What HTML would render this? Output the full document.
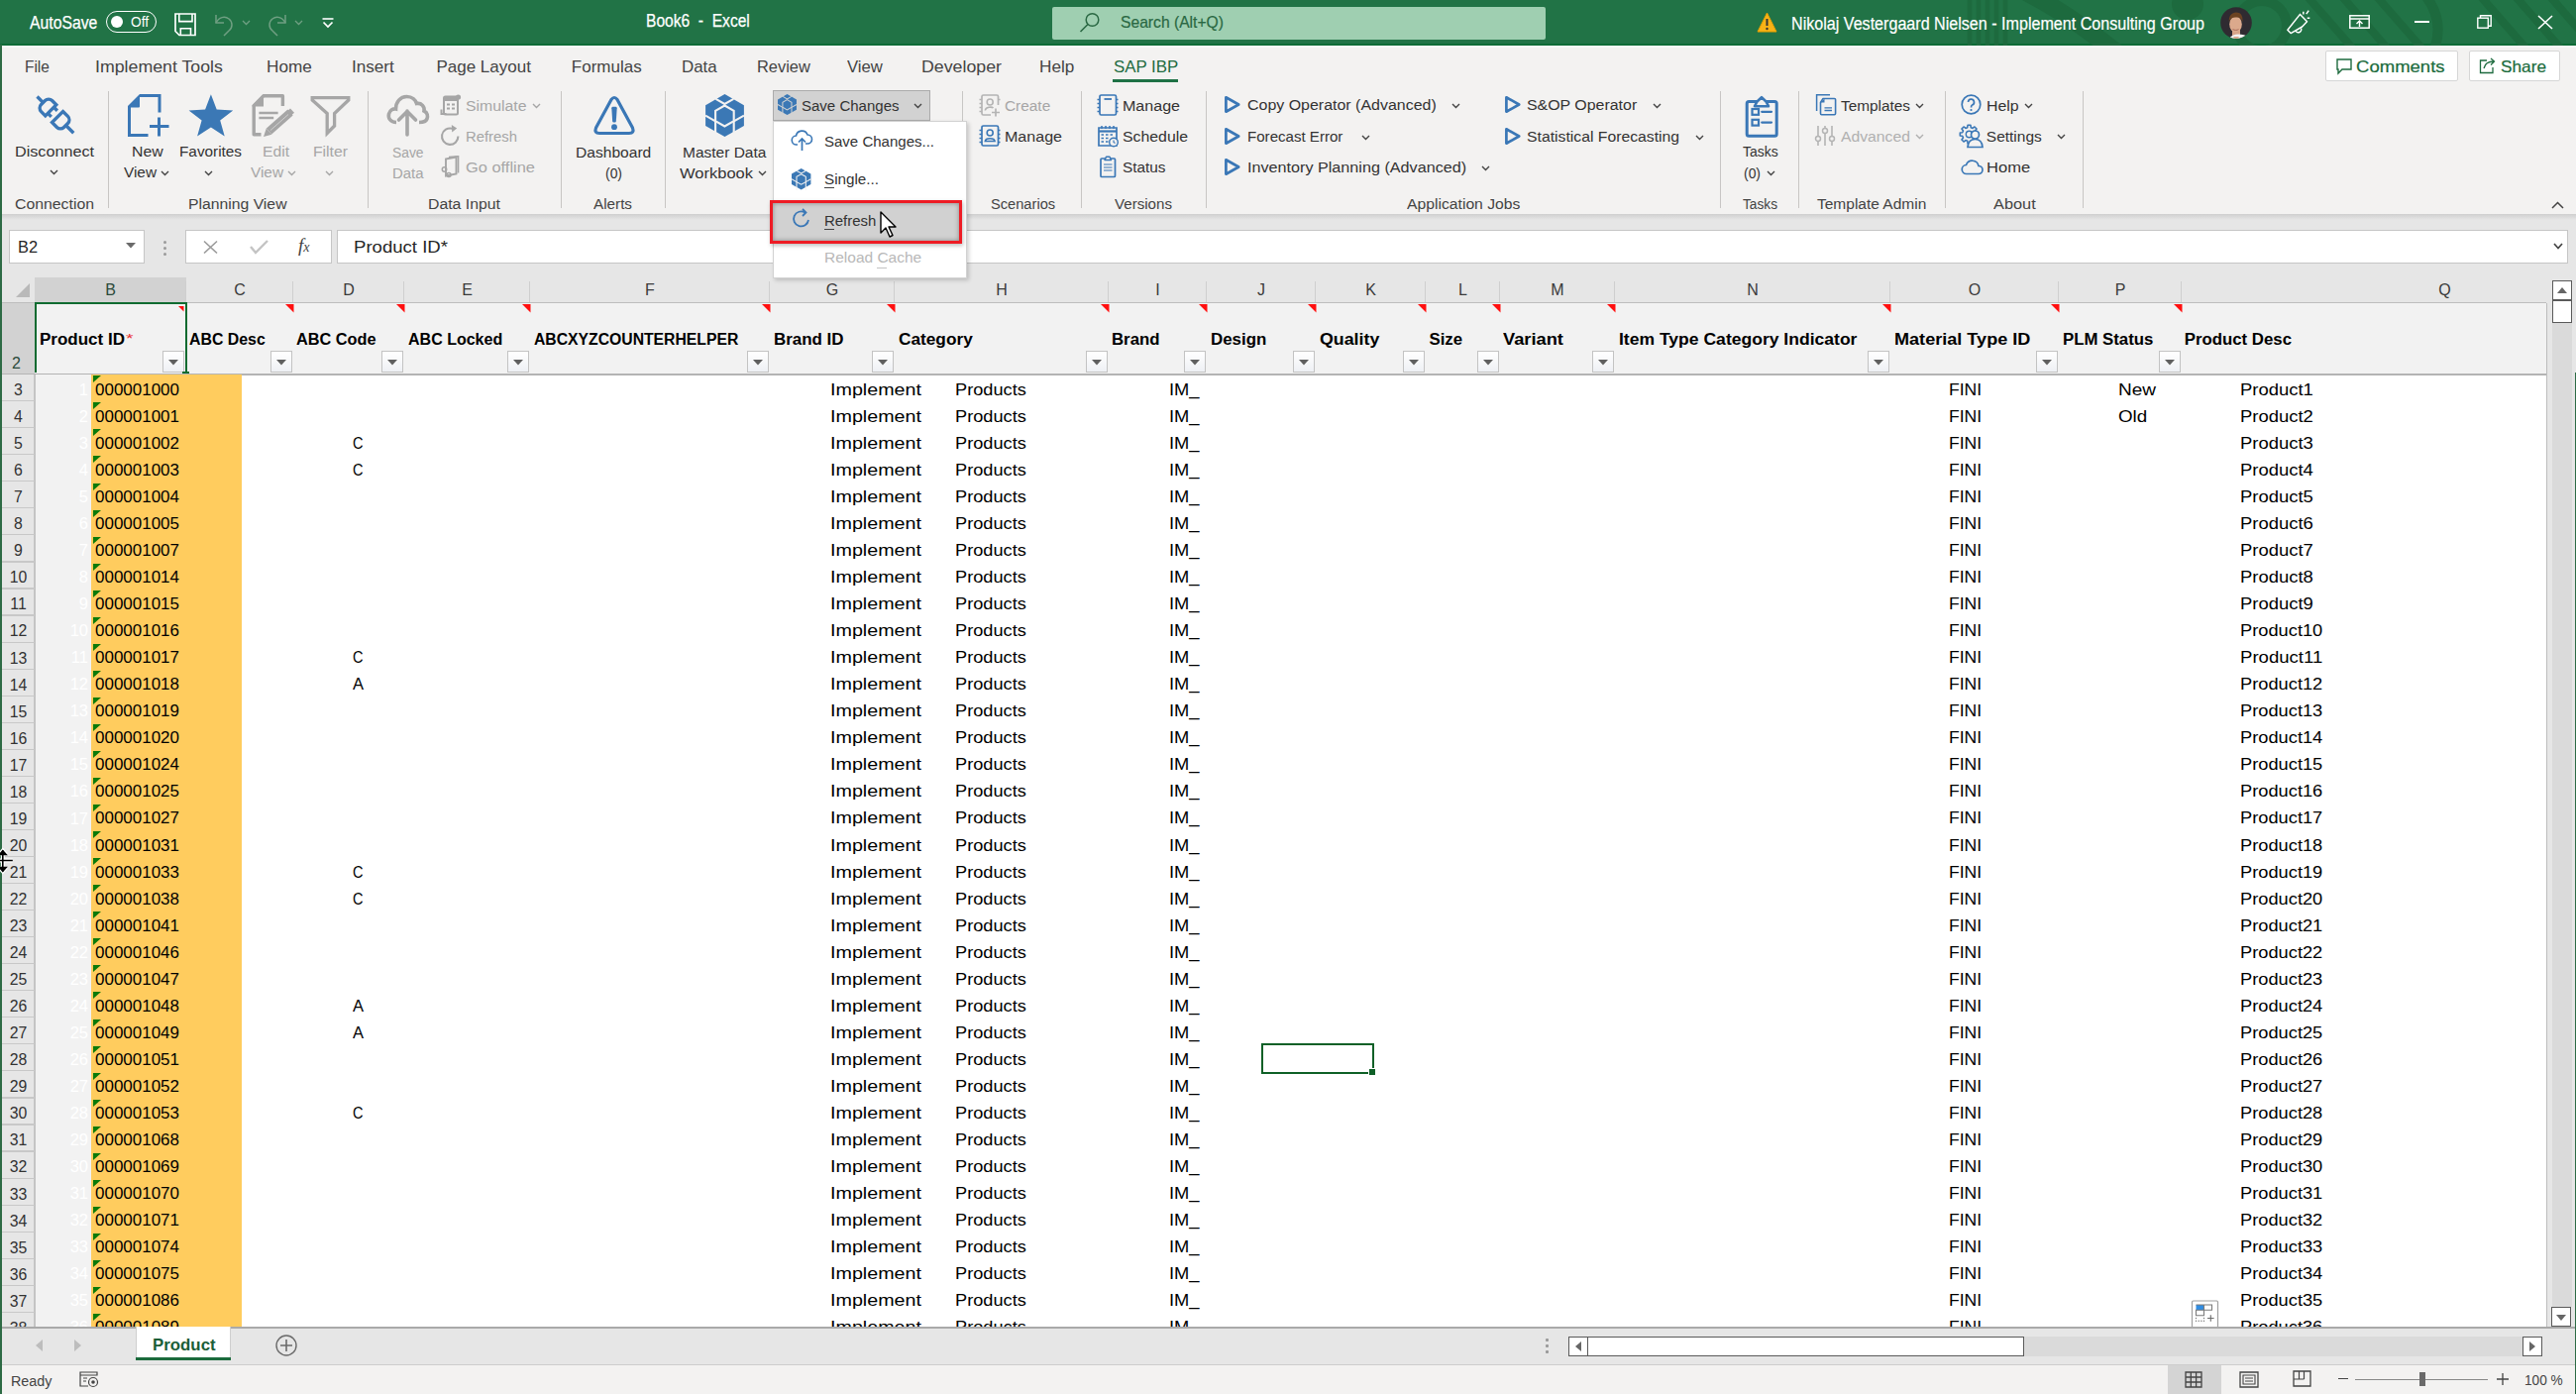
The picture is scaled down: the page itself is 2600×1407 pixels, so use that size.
<!DOCTYPE html><html><head><meta charset="utf-8"><style>
*{margin:0;padding:0;box-sizing:border-box}
html,body{width:2600px;height:1407px;overflow:hidden;background:#fff;position:relative}
body>div,body>svg{position:absolute}
.t{white-space:pre;line-height:1;font-family:"Liberation Sans",sans-serif;transform-origin:0 0}
svg{overflow:visible}
</style></head><body><div style="left:0px;top:45px;width:2600px;height:171px;background:#f3f2f1;"></div>
<div style="left:0px;top:45.5px;width:2600px;height:2.5px;background:#f9f9f9;"></div>
<div style="left:0px;top:0px;width:2600px;height:45.5px;background:#217346;"></div>
<div style="left:0px;top:43.8px;width:2600px;height:1.9px;background:#0c6b36;"></div>
<div style="left:0px;top:216px;width:2600px;height:64px;background:#e6e6e6;"></div>
<div style="left:0px;top:216px;width:2600px;height:6px;background:linear-gradient(#cfcfcf,#e6e6e6);"></div>
<div class="t" style="left:29.5px;top:14.57px;font-size:17.5px;color:#ffffff;transform:scaleX(0.9000);-webkit-text-stroke:0.25px #fff;">AutoSave</div>
<div style="left:107px;top:11px;width:51px;height:22px;border:1.6px solid #fff;border-radius:11px"></div>
<div style="left:112px;top:16px;width:12px;height:12px;border-radius:6px;background:#fff"></div>
<div class="t" style="left:132px;top:14.48px;font-size:15.5px;color:#ffffff;transform:scaleX(0.8828);">Off</div>
<svg style="left:176px;top:12.5px;" width="23" height="24" viewBox="0 0 23 24"><path d="M1 1H21V22.5H5L1 18.5Z" fill="none" stroke="#fff" stroke-width="1.7"/><path d="M4.8 1V8.6H18V1" fill="none" stroke="#fff" stroke-width="1.6"/><path d="M6.3 22.5V15.8H16.5V22.5" fill="none" stroke="#fff" stroke-width="1.6"/></svg>
<svg style="left:215px;top:13px;" width="22" height="23" viewBox="0 0 22 23"><path d="M3 2v8h8" fill="none" stroke="#6f9f82" stroke-width="1.5"/><path d="M3 10C6 4 12 3 16 6c4 3 4 9 0 12l-5 5" fill="none" stroke="#6f9f82" stroke-width="1.5"/></svg>
<svg style="left:244px;top:20px;" width="9" height="6" viewBox="0 0 9 6"><path d="M1 1l3.5 3.5L8 1" fill="none" stroke="#6f9f82" stroke-width="1.3"/></svg>
<svg style="left:269px;top:13px;" width="22" height="23" viewBox="0 0 22 23"><path d="M19 2v8h-8" fill="none" stroke="#6f9f82" stroke-width="1.5"/><path d="M19 10C16 4 10 3 6 6c-4 3-4 9 0 12l5 5" fill="none" stroke="#6f9f82" stroke-width="1.5"/></svg>
<svg style="left:297px;top:20px;" width="9" height="6" viewBox="0 0 9 6"><path d="M1 1l3.5 3.5L8 1" fill="none" stroke="#6f9f82" stroke-width="1.3"/></svg>
<svg style="left:325px;top:18px;" width="12" height="11" viewBox="0 0 12 11"><path d="M0.5 1h11" stroke="#fff" stroke-width="1.6"/><path d="M1.5 4.5l4.5 4.5 4.5-4.5" fill="none" stroke="#fff" stroke-width="1.7"/></svg>
<div class="t" style="left:652px;top:13.18px;font-size:17.5px;color:#ffffff;transform:scaleX(0.8905);-webkit-text-stroke:0.25px #fff;">Book6  -  Excel</div>
<div style="left:1062px;top:7px;width:498px;height:33px;background:#9fcfb1;border-radius:2px"></div>
<svg style="left:1089px;top:12px;" width="22" height="22" viewBox="0 0 22 22"><circle cx="13.5" cy="8" r="6.3" fill="none" stroke="#2a6843" stroke-width="1.5"/><path d="M9 12.5L1.5 20" stroke="#2a6843" stroke-width="1.6"/></svg>
<div class="t" style="left:1130.5px;top:14.25px;font-size:17px;color:#2a6843;transform:scaleX(0.9211);-webkit-text-stroke:0.2px #2a6843;">Search (Alt+Q)</div>
<svg style="left:1940px;top:0;overflow:hidden" width="660" height="45.5" viewBox="0 0 660 45.5"><g fill="none" stroke="#1d6a3e"><path d="M48 -5V55M57 -5V55M66 -5V55M75 -5V55M84 -5V55" stroke-width="4.5"/><path d="M105 -8Q150 15 205 60" stroke-width="18"/><circle cx="268" cy="4" r="16" fill="#1d6a3e" stroke="none"/><circle cx="343" cy="26" r="25" stroke-width="10"/><path d="M385 -8L440 55M420 -8L475 55M455 -8L510 55" stroke-width="8"/><path d="M505 -8Q530 20 515 55" stroke-width="10"/><path d="M560 -8L615 55M595 -8L650 55M630 -8L685 55" stroke-width="8"/></g></svg>
<svg style="left:1773px;top:12px;" width="21" height="21" viewBox="0 0 21 21"><path d="M10.5 1L20 20H1z" fill="#f7b217" stroke="#e8a000" stroke-width="1"/><path d="M10.5 7v7" stroke="#333" stroke-width="2"/><circle cx="10.5" cy="17" r="1.2" fill="#333"/></svg>
<div class="t" style="left:1807.5px;top:14.80px;font-size:18px;color:#ffffff;transform:scaleX(0.8944);-webkit-text-stroke:0.2px #fff;">Nikolaj Vestergaard Nielsen - Implement Consulting Group</div>
<svg style="left:2240.5px;top:7px;" width="32" height="32" viewBox="0 0 32 32"><defs><clipPath id="av"><circle cx="16" cy="16" r="15.8"/></clipPath></defs><g clip-path="url(#av)"><rect width="32" height="32" fill="#2f2b31"/><path d="M12 23h8v10h-8z" fill="#d7a488"/><path d="M8 34C10 29 14 27.5 18 27.5S26 28 29 31V34z" fill="#f4f2f2"/><path d="M13 30l3 4 3-4" fill="#d7a488"/><ellipse cx="15.5" cy="17.5" rx="6.3" ry="8" fill="#dba98c"/><path d="M8.8 15C8.5 9 11.5 5.5 16 5.5S23 8.5 22.5 15C21 11 19 10.5 16 10.5S10.5 11 8.8 15z" fill="#6b4222"/><path d="M12.5 22.5c2 1.2 4.5 1.2 6 0" stroke="#a86a58" stroke-width="1" fill="none"/></g></svg>
<svg style="left:2308px;top:11px;" width="24" height="24" viewBox="0 0 24 24"><path d="M13.5 3.4L20.5 10.7L15.6 16L4.1 22.6L0.9 19.3Z" fill="none" stroke="#fff" stroke-width="1.5" stroke-linejoin="round"/><path d="M9 20A3 3 0 0 0 14.5 17.5" fill="none" stroke="#fff" stroke-width="1.4"/><path d="M16.8 0.8V3.6M19.8 3.2L22.2 -0.3M20.7 7.3H23.3" stroke="#fff" stroke-width="1.5"/></svg>
<svg style="left:2371px;top:15px;" width="21" height="14" viewBox="0 0 21 14"><rect x="0.8" y="0.8" width="19.4" height="12.4" fill="none" stroke="#fff" stroke-width="1.5"/><path d="M1 4h19" stroke="#fff" stroke-width="1.5"/><path d="M10.5 12V6M7.5 9l3-3 3 3" fill="none" stroke="#fff" stroke-width="1.4"/></svg>
<div style="left:2437px;top:21px;width:15px;height:1.6px;background:#fff;"></div>
<svg style="left:2500px;top:15px;" width="15" height="14" viewBox="0 0 15 14"><rect x="0.8" y="3.2" width="10.5" height="10" fill="none" stroke="#fff" stroke-width="1.4"/><path d="M3.5 3V0.8h10.7v10.5H11.5" fill="none" stroke="#fff" stroke-width="1.4"/></svg>
<svg style="left:2561px;top:15px;" width="16" height="15" viewBox="0 0 16 15"><path d="M1 1l14 13M15 1L1 14" stroke="#fff" stroke-width="1.6"/></svg>
<div class="t" style="left:24.8px;top:58.95px;font-size:17px;color:#444;transform:scaleX(0.9090);">File</div>
<div class="t" style="left:96.3px;top:58.95px;font-size:17px;color:#444;transform:scaleX(1.0440);">Implement Tools</div>
<div class="t" style="left:268.6px;top:58.95px;font-size:17px;color:#444;transform:scaleX(1.0099);">Home</div>
<div class="t" style="left:354.7px;top:58.95px;font-size:17px;color:#444;transform:scaleX(1.0066);">Insert</div>
<div class="t" style="left:440.4px;top:58.95px;font-size:17px;color:#444;">Page Layout</div>
<div class="t" style="left:576.8px;top:58.95px;font-size:17px;color:#444;">Formulas</div>
<div class="t" style="left:687.8px;top:58.95px;font-size:17px;color:#444;transform:scaleX(0.9942);">Data</div>
<div class="t" style="left:763.6px;top:58.95px;font-size:17px;color:#444;transform:scaleX(0.9652);">Review</div>
<div class="t" style="left:855.4px;top:58.95px;font-size:17px;color:#444;transform:scaleX(0.9824);">View</div>
<div class="t" style="left:929.9px;top:58.95px;font-size:17px;color:#444;transform:scaleX(1.0453);">Developer</div>
<div class="t" style="left:1048.9px;top:58.95px;font-size:17px;color:#444;transform:scaleX(1.0096);">Help</div>
<div class="t" style="left:1123.6px;top:58.95px;font-size:17px;color:#1e6b3f;transform:scaleX(0.9919);">SAP IBP</div>
<div style="left:1123px;top:80px;width:66px;height:3px;background:#1e7145;"></div>
<div style="left:2347px;top:51px;width:134px;height:31px;background:#fff;border:1px solid #d6d6d6;border-radius:2px"></div>
<svg style="left:2358px;top:59px;" width="16" height="16" viewBox="0 0 16 16"><path d="M1 1h14v10H6l-4 4v-4H1z" fill="none" stroke="#1e6b3f" stroke-width="1.4"/></svg>
<div class="t" style="left:2377.6px;top:58.82px;font-size:16.5px;color:#1a6b3c;transform:scaleX(1.1232);-webkit-text-stroke:0.2px #1a6b3c;">Comments</div>
<div style="left:2492px;top:51px;width:92px;height:31px;background:#fff;border:1px solid #d6d6d6;border-radius:2px"></div>
<svg style="left:2502px;top:58px;" width="17" height="17" viewBox="0 0 17 17"><path d="M8 3H1.5v12.5h12.5V10" fill="none" stroke="#1e6b3f" stroke-width="1.3"/><path d="M5 11c1-5 5-7 10-7M12 1l3.5 3L12 7.5" fill="none" stroke="#1e6b3f" stroke-width="1.3"/></svg>
<div class="t" style="left:2524.3px;top:58.82px;font-size:16.5px;color:#1a6b3c;transform:scaleX(1.0447);-webkit-text-stroke:0.2px #1a6b3c;">Share</div>
<div style="left:108.5px;top:92px;width:1.3px;height:118px;background:#c8c6c4;"></div>
<div style="left:371px;top:92px;width:1.3px;height:118px;background:#c8c6c4;"></div>
<div style="left:566px;top:92px;width:1.3px;height:118px;background:#c8c6c4;"></div>
<div style="left:671px;top:92px;width:1.3px;height:118px;background:#c8c6c4;"></div>
<div style="left:971px;top:92px;width:1.3px;height:118px;background:#c8c6c4;"></div>
<div style="left:1091px;top:92px;width:1.3px;height:118px;background:#c8c6c4;"></div>
<div style="left:1217px;top:92px;width:1.3px;height:118px;background:#c8c6c4;"></div>
<div style="left:1736px;top:92px;width:1.3px;height:118px;background:#c8c6c4;"></div>
<div style="left:1815px;top:92px;width:1.3px;height:118px;background:#c8c6c4;"></div>
<div style="left:1963px;top:92px;width:1.3px;height:118px;background:#c8c6c4;"></div>
<div style="left:2102px;top:92px;width:1.3px;height:118px;background:#c8c6c4;"></div>
<svg style="left:36px;top:96px;" width="42" height="42" viewBox="0 0 42 42"><g transform="translate(1.5 1.5) rotate(45)" fill="none" stroke="#3a77b6" stroke-width="3.3"><path d="M0 0H9"/><path d="M19.5 -7.8H13.5A5 5 0 0 0 8.5 -2.8V2.8A5 5 0 0 0 13.5 7.8H19.5Z"/><path d="M19.5 -4.3H24.5M19.5 4.3H24.5"/><path d="M29 -7.8H36A5 5 0 0 1 41 -2.8V2.8A5 5 0 0 1 36 7.8H29Z"/><path d="M41 0H52"/></g></svg>
<div class="t" style="left:15px;top:144.98px;font-size:15.5px;color:#333333;transform:scaleX(1.0433);">Disconnect</div>
<svg style="left:50px;top:171px;" width="9" height="6" viewBox="0 0 9 6"><path d="M1 1l3.5 3.5L8 1" fill="none" stroke="#444" stroke-width="1.4"/></svg>
<div class="t" style="left:14.5px;top:198.28px;font-size:15.5px;color:#444;transform:scaleX(1.0202);">Connection</div>
<svg style="left:129px;top:95px;" width="44" height="44" viewBox="0 0 44 44"><path d="M12 1.5H32V18.5M20.5 41.5H1.5V12" fill="none" stroke="#3a77b6" stroke-width="3"/><path d="M0 12L12 0V12.5Q12 13.5 11 13.5H0z" fill="#3a77b6"/><path d="M31.5 23.5V42.5M22 32.5H41.5" stroke="#3a77b6" stroke-width="3"/></svg>
<div class="t" style="left:133px;top:144.98px;font-size:15.5px;color:#333333;transform:scaleX(1.0191);">New</div>
<div class="t" style="left:125px;top:166.48px;font-size:15.5px;color:#333333;transform:scaleX(0.9905);">View</div>
<svg style="left:162px;top:172px;" width="9" height="6" viewBox="0 0 9 6"><path d="M1 1l3.5 3.5L8 1" fill="none" stroke="#444" stroke-width="1.4"/></svg>
<svg style="left:190.5px;top:95px;" width="44" height="43" viewBox="0 0 44 43"><path d="M21.9 0.2 L27.7 15.6 L44.2 16.4 L31.2 26.6 L35.7 42.5 L21.9 33.4 L8.1 42.5 L12.6 26.6 L-0.4 16.4 L16.1 15.6z" fill="#3b78b5"/></svg>
<div class="t" style="left:181px;top:144.98px;font-size:15.5px;color:#333333;transform:scaleX(0.9884);">Favorites</div>
<svg style="left:206px;top:172px;" width="9" height="6" viewBox="0 0 9 6"><path d="M1 1l3.5 3.5L8 1" fill="none" stroke="#444" stroke-width="1.4"/></svg>
<svg style="left:254px;top:95px;" width="45" height="44" viewBox="0 0 45 44"><path d="M31.4 12V1.8H12L2.2 11.6V40.7H9.5" fill="none" stroke="#a6a6a6" stroke-width="3.4" stroke-linejoin="round"/><path d="M0.5 11.5L12 0V12.5H0.5z" fill="#a6a6a6"/><path d="M7.4 19H26.6M7.4 24H22.2" stroke="#a6a6a6" stroke-width="2.6"/><path d="M17.5 37.5L39 18.5" stroke="#a6a6a6" stroke-width="8"/><path d="M14.8 34.5L20.3 40.7L12 43z" fill="#a6a6a6"/><path d="M39 14.5L43 18.8L40 21.5L36 17.2z" fill="#a6a6a6"/><path d="M19 36.5L37 20.5" stroke="#cfcfcf" stroke-width="1"/></svg>
<div class="t" style="left:265px;top:144.98px;font-size:15.5px;color:#a6a6a6;transform:scaleX(1.0109);">Edit</div>
<div class="t" style="left:253px;top:166.48px;font-size:15.5px;color:#a6a6a6;transform:scaleX(0.9905);">View</div>
<svg style="left:290px;top:172px;" width="9" height="6" viewBox="0 0 9 6"><path d="M1 1l3.5 3.5L8 1" fill="none" stroke="#a6a6a6" stroke-width="1.4"/></svg>
<svg style="left:313px;top:96px;" width="42" height="41" viewBox="0 0 42 41"><path d="M2.2 2.6H38.8V5L24.6 18.5V31L17.2 38.5V18.5L2.2 5Z" fill="none" stroke="#a6a6a6" stroke-width="3.3" stroke-linejoin="miter"/></svg>
<div class="t" style="left:316px;top:144.98px;font-size:15.5px;color:#a6a6a6;transform:scaleX(1.0161);">Filter</div>
<svg style="left:328px;top:172px;" width="9" height="6" viewBox="0 0 9 6"><path d="M1 1l3.5 3.5L8 1" fill="none" stroke="#a6a6a6" stroke-width="1.4"/></svg>
<div class="t" style="left:190px;top:198.28px;font-size:15.5px;color:#444;transform:scaleX(1.0158);">Planning View</div>
<svg style="left:390px;top:95px;" width="43" height="43" viewBox="0 0 43 43"><path d="M10 28.5C4 28.5 1.5 24 2.5 20C3.5 16 7 14.5 9.5 15C9.5 8 14 2.5 20.5 2.5C26 2.5 29.5 6 30.5 9.5C35 8.5 39 12.5 38 17C41.5 18.5 42 22 41 25C40 27.5 37.5 28.5 33 28.5" fill="none" stroke="#a6a6a6" stroke-width="3.6"/><path d="M21 41V17M12.5 26L21 17.5 29.5 26" fill="none" stroke="#a6a6a6" stroke-width="3.6" stroke-linecap="round"/></svg>
<div class="t" style="left:395.5px;top:145.68px;font-size:15.5px;color:#a6a6a6;transform:scaleX(0.8916);">Save</div>
<div class="t" style="left:395.5px;top:166.98px;font-size:15.5px;color:#a6a6a6;transform:scaleX(0.9621);">Data</div>
<svg style="left:444px;top:95px;" width="22" height="22" viewBox="0 0 22 22"><rect x="4" y="2.5" width="14" height="18" rx="1.5" fill="none" stroke="#a6a6a6" stroke-width="2"/><path d="M4 3h14v4H4z" fill="#a6a6a6"/><path d="M7 10.5h3M12 10.5h3M7 14.5h3M12 14.5h3" stroke="#a6a6a6" stroke-width="2.2"/><circle cx="18.5" cy="3" r="2.6" fill="#a6a6a6"/><path d="M1.5 15.5v4.5h5" fill="none" stroke="#a6a6a6" stroke-width="2"/></svg>
<div class="t" style="left:470px;top:98.88px;font-size:15.5px;color:#a6a6a6;transform:scaleX(1.0198);">Simulate</div>
<svg style="left:537px;top:104px;" width="9" height="6" viewBox="0 0 9 6"><path d="M1 1l3.5 3.5L8 1" fill="none" stroke="#a6a6a6" stroke-width="1.4"/></svg>
<svg style="left:445px;top:126px;" width="20" height="22" viewBox="0 0 20 22"><path d="M11.5 3.8A8.2 8.2 0 1 0 17.4 11.5" fill="none" stroke="#a6a6a6" stroke-width="2.1"/><path d="M10.8 0L16.2 3.6L11.2 7.6z" fill="#a6a6a6"/></svg>
<div class="t" style="left:470px;top:129.88px;font-size:15.5px;color:#a6a6a6;transform:scaleX(0.9581);">Refresh</div>
<svg style="left:445px;top:157px;" width="20" height="22" viewBox="0 0 20 22"><path d="M5 3.5L15.5 1.5V18.5L5 20.5z" fill="none" stroke="#a6a6a6" stroke-width="1.9"/><path d="M8 1.5L17.5 0.8V17.5" fill="none" stroke="#a6a6a6" stroke-width="1.6"/><circle cx="3.5" cy="14" r="2.2" fill="none" stroke="#a6a6a6" stroke-width="1.5"/><circle cx="8" cy="19.5" r="2" fill="none" stroke="#a6a6a6" stroke-width="1.5"/></svg>
<div class="t" style="left:470px;top:160.88px;font-size:15.5px;color:#a6a6a6;transform:scaleX(1.0596);">Go offline</div>
<div class="t" style="left:432px;top:198.28px;font-size:15.5px;color:#444;transform:scaleX(1.0207);">Data Input</div>
<svg style="left:598px;top:96px;" width="44" height="41" viewBox="0 0 44 41"><path d="M19 4.5Q22 0.5 25 4.5L40.5 33Q42.5 38.5 37 38.5H7Q1.5 38.5 3.5 33z" fill="none" stroke="#3a77b6" stroke-width="3.2" stroke-linejoin="round"/><path d="M19.3 13.2Q19.3 11.8 20.7 11.8H23.3Q24.7 11.8 24.7 13.2L23.8 26.5Q23.7 27.5 22.7 27.5H21.3Q20.3 27.5 20.2 26.5z" fill="#3a77b6"/><circle cx="22" cy="32.2" r="2.9" fill="#3a77b6"/></svg>
<div class="t" style="left:581px;top:145.68px;font-size:15.5px;color:#333333;transform:scaleX(1.0062);">Dashboard</div>
<div class="t" style="left:611px;top:166.98px;font-size:15.5px;color:#333333;transform:scaleX(0.8973);">(0)</div>
<div class="t" style="left:599px;top:198.28px;font-size:15.5px;color:#444;transform:scaleX(0.9843);">Alerts</div>
<svg style="left:711.5px;top:95px;" width="39" height="43" viewBox="0 0 38.8 43"><path d="M19.4 0L38.8 11.2V32L19.4 43 0 32V11.2z" fill="#3b78b5"/><g fill="none" stroke="#f3f2f1" stroke-width="2.1" stroke-linejoin="miter"><path d="M10.4 4.9L19.3 10 28.3 4.9"/><path d="M19.3 11.5L28.6 16.8V27.2L19.3 32.5 10 27.2V16.8z"/><path d="M0 21.6L10 27.3M38.8 21.6L28.6 27.3M10 27.2V44M28.6 27.2V44"/></g></svg>
<div class="t" style="left:689px;top:145.68px;font-size:15.5px;color:#333333;">Master Data</div>
<div class="t" style="left:686px;top:166.98px;font-size:15.5px;color:#333333;transform:scaleX(1.0648);">Workbook</div>
<svg style="left:765px;top:172px;" width="9" height="6" viewBox="0 0 9 6"><path d="M1 1l3.5 3.5L8 1" fill="none" stroke="#444" stroke-width="1.4"/></svg>
<div style="left:780px;top:91px;width:159px;height:31px;background:#d2d2d2;border:1px solid #ababab"></div>
<svg style="left:785px;top:95px;" width="19" height="21" viewBox="0 0 38.8 43"><path d="M19.4 0L38.8 11.2V32L19.4 43 0 32V11.2z" fill="#3b78b5"/><g fill="none" stroke="#d2d2d2" stroke-width="2.1" stroke-linejoin="miter"><path d="M10.4 4.9L19.3 10 28.3 4.9"/><path d="M19.3 11.5L28.6 16.8V27.2L19.3 32.5 10 27.2V16.8z"/><path d="M0 21.6L10 27.3M38.8 21.6L28.6 27.3M10 27.2V44M28.6 27.2V44"/></g></svg>
<div class="t" style="left:809px;top:98.88px;font-size:15.5px;color:#333333;transform:scaleX(0.9687);">Save Changes</div>
<svg style="left:922px;top:104px;" width="9" height="6" viewBox="0 0 9 6"><path d="M1 1l3.5 3.5L8 1" fill="none" stroke="#444" stroke-width="1.4"/></svg>
<svg style="left:987px;top:94px;" width="24" height="24" viewBox="0 0 24 24"><path d="M13 22H5.5Q4 22 4 20.5V3.5Q4 2 5.5 2H19Q20.5 2 20.5 3.5V12" fill="none" stroke="#b4b4b4" stroke-width="1.7"/><circle cx="12.2" cy="9" r="3" fill="none" stroke="#b4b4b4" stroke-width="1.6"/><path d="M7.3 17.5C7.8 13.8 14 13.5 15.5 15" fill="none" stroke="#b4b4b4" stroke-width="1.6"/><path d="M1.5 6.5H4M1.5 10.5H4M1.5 14.5H4M1.5 18.5H4M20.5 6.5H22.5" stroke="#b4b4b4" stroke-width="1.3"/><path d="M18 15.5V23.5M14 19.5H22" stroke="#b4b4b4" stroke-width="1.7"/></svg>
<div class="t" style="left:1013.8px;top:98.88px;font-size:15.5px;color:#a6a6a6;transform:scaleX(0.9930);">Create</div>
<svg style="left:987px;top:125px;" width="24" height="24" viewBox="0 0 24 24"><rect x="4" y="2" width="16.5" height="20" rx="1.5" fill="none" stroke="#3a77b6" stroke-width="1.7"/><circle cx="12.2" cy="9" r="3" fill="none" stroke="#3a77b6" stroke-width="1.6"/><path d="M7.3 17.5C7.8 13.8 16.6 13.8 17.1 17.5z" fill="none" stroke="#3a77b6" stroke-width="1.6"/><path d="M1.5 6.5H4M1.5 10.5H4M1.5 14.5H4M1.5 18.5H4M20.5 6.5H22.5M20.5 10.5H22.5M20.5 14.5H22.5M20.5 18.5H22.5" stroke="#3a77b6" stroke-width="1.3"/></svg>
<div class="t" style="left:1013.8px;top:129.88px;font-size:15.5px;color:#333333;transform:scaleX(1.0354);">Manage</div>
<div class="t" style="left:999.5px;top:198.28px;font-size:15.5px;color:#444;transform:scaleX(0.9445);">Scenarios</div>
<svg style="left:1106px;top:94px;" width="24" height="24" viewBox="0 0 24 24"><rect x="4" y="2" width="16.5" height="20" rx="1.5" fill="none" stroke="#3a77b6" stroke-width="1.7"/><path d="M8.5 6H16" stroke="#3a77b6" stroke-width="1.8"/><path d="M1.5 6.5H4M1.5 10.5H4M1.5 14.5H4M1.5 18.5H4M20.5 6.5H22.5M20.5 10.5H22.5M20.5 14.5H22.5M20.5 18.5H22.5" stroke="#3a77b6" stroke-width="1.3"/></svg>
<div class="t" style="left:1132.5px;top:98.88px;font-size:15.5px;color:#333333;transform:scaleX(1.0354);">Manage</div>
<svg style="left:1106px;top:125px;" width="24" height="24" viewBox="0 0 24 24"><path d="M3 4H21V22H3z" fill="none" stroke="#3a77b6" stroke-width="1.7"/><path d="M3 7.5H21" stroke="#3a77b6" stroke-width="2.2"/><path d="M6 2V5M10 2V5M14 2V5M18 2V5" stroke="#3a77b6" stroke-width="1.5"/><path d="M5.5 11H8M10 11H12.5M14.5 11H17M5.5 14.5H8M10 14.5H12.5M5.5 18H8M10 18H12.5" stroke="#3a77b6" stroke-width="1.6"/><circle cx="18" cy="18.5" r="4.3" fill="#f3f2f1" stroke="#3a77b6" stroke-width="1.4"/><path d="M18 16.5V18.5L19.5 19.5" fill="none" stroke="#3a77b6" stroke-width="1.1"/></svg>
<div class="t" style="left:1132.5px;top:129.88px;font-size:15.5px;color:#333333;transform:scaleX(1.0211);">Schedule</div>
<svg style="left:1106px;top:156px;" width="24" height="24" viewBox="0 0 24 24"><rect x="5" y="4" width="14.5" height="18.5" rx="1" fill="none" stroke="#3a77b6" stroke-width="1.7"/><path d="M9 5.5L10.5 2.2H14L15.5 5.5z" fill="#f3f2f1" stroke="#3a77b6" stroke-width="1.5" stroke-linejoin="round"/><path d="M8 10H16.5M8 13H16.5M8 16H16.5" stroke="#3a77b6" stroke-width="1.2"/></svg>
<div class="t" style="left:1132.5px;top:160.88px;font-size:15.5px;color:#333333;transform:scaleX(0.9899);">Status</div>
<div class="t" style="left:1124.5px;top:198.28px;font-size:15.5px;color:#444;transform:scaleX(0.9756);">Versions</div>
<svg style="left:1235px;top:96px;" width="18" height="19" viewBox="0 0 18 19"><path d="M2.4 2.3L15.2 9.5L2.4 16.7z" fill="none" stroke="#3a77b6" stroke-width="2.7" stroke-linejoin="round"/></svg>
<div class="t" style="left:1259.3px;top:98.47px;font-size:15.5px;color:#333333;transform:scaleX(1.0295);">Copy Operator (Advanced)</div>
<svg style="left:1465px;top:104px;" width="9" height="6" viewBox="0 0 9 6"><path d="M1 1l3.5 3.5L8 1" fill="none" stroke="#444" stroke-width="1.4"/></svg>
<svg style="left:1235px;top:127.5px;" width="18" height="19" viewBox="0 0 18 19"><path d="M2.4 2.3L15.2 9.5L2.4 16.7z" fill="none" stroke="#3a77b6" stroke-width="2.7" stroke-linejoin="round"/></svg>
<div class="t" style="left:1259.3px;top:129.98px;font-size:15.5px;color:#333333;transform:scaleX(0.9732);">Forecast Error</div>
<svg style="left:1374px;top:135.5px;" width="9" height="6" viewBox="0 0 9 6"><path d="M1 1l3.5 3.5L8 1" fill="none" stroke="#444" stroke-width="1.4"/></svg>
<svg style="left:1235px;top:159px;" width="18" height="19" viewBox="0 0 18 19"><path d="M2.4 2.3L15.2 9.5L2.4 16.7z" fill="none" stroke="#3a77b6" stroke-width="2.7" stroke-linejoin="round"/></svg>
<div class="t" style="left:1259.3px;top:161.48px;font-size:15.5px;color:#333333;transform:scaleX(1.0431);">Inventory Planning (Advanced)</div>
<svg style="left:1495px;top:167px;" width="9" height="6" viewBox="0 0 9 6"><path d="M1 1l3.5 3.5L8 1" fill="none" stroke="#444" stroke-width="1.4"/></svg>
<svg style="left:1518px;top:96px;" width="18" height="19" viewBox="0 0 18 19"><path d="M2.4 2.3L15.2 9.5L2.4 16.7z" fill="none" stroke="#3a77b6" stroke-width="2.7" stroke-linejoin="round"/></svg>
<div class="t" style="left:1541.2px;top:98.47px;font-size:15.5px;color:#333333;transform:scaleX(1.0271);">S&amp;OP Operator</div>
<svg style="left:1668px;top:104px;" width="9" height="6" viewBox="0 0 9 6"><path d="M1 1l3.5 3.5L8 1" fill="none" stroke="#444" stroke-width="1.4"/></svg>
<svg style="left:1518px;top:127.5px;" width="18" height="19" viewBox="0 0 18 19"><path d="M2.4 2.3L15.2 9.5L2.4 16.7z" fill="none" stroke="#3a77b6" stroke-width="2.7" stroke-linejoin="round"/></svg>
<div class="t" style="left:1541.2px;top:129.98px;font-size:15.5px;color:#333333;transform:scaleX(1.0164);">Statistical Forecasting</div>
<svg style="left:1711px;top:135.5px;" width="9" height="6" viewBox="0 0 9 6"><path d="M1 1l3.5 3.5L8 1" fill="none" stroke="#444" stroke-width="1.4"/></svg>
<div class="t" style="left:1419.6px;top:198.28px;font-size:15.5px;color:#444;transform:scaleX(1.0135);">Application Jobs</div>
<svg style="left:1760px;top:94px;" width="36" height="45" viewBox="0 0 36 45"><rect x="3.2" y="8.5" width="30" height="34.8" rx="2" fill="none" stroke="#3a77b6" stroke-width="3"/><path d="M11 13.2H25L22.5 8.5 18 4.2 13.5 8.5Z" fill="#f3f2f1" stroke="#3a77b6" stroke-width="2.6" stroke-linejoin="round"/><rect x="8.5" y="16" width="6.5" height="5.8" fill="none" stroke="#3a77b6" stroke-width="2.2"/><rect x="8.5" y="26.8" width="6.5" height="5.8" fill="none" stroke="#3a77b6" stroke-width="2.2"/><path d="M18.2 18.8H28M18.2 29.6H28" stroke="#3a77b6" stroke-width="2.2" stroke-linecap="round"/></svg>
<div class="t" style="left:1758.7px;top:144.68px;font-size:15.5px;color:#333333;transform:scaleX(0.9010);">Tasks</div>
<div class="t" style="left:1760px;top:166.98px;font-size:15.5px;color:#333333;transform:scaleX(0.8973);">(0)</div>
<svg style="left:1783px;top:172px;" width="9" height="6" viewBox="0 0 9 6"><path d="M1 1l3.5 3.5L8 1" fill="none" stroke="#444" stroke-width="1.4"/></svg>
<div class="t" style="left:1759px;top:198.28px;font-size:15.5px;color:#444;transform:scaleX(0.8834);">Tasks</div>
<svg style="left:1832px;top:94px;" width="22" height="24" viewBox="0 0 22 24"><path d="M1.6 18V1.8H15" fill="none" stroke="#3a77b6" stroke-width="1.5"/><path d="M8 5.5H19.5Q20.6 5.5 20.6 6.6V20.6Q20.6 21.7 19.5 21.7H6.6Q5.5 21.7 5.5 20.6V9.5Z" fill="none" stroke="#3a77b6" stroke-width="1.6" stroke-linejoin="round"/><path d="M5.5 9.5L9.5 5.5V9.5z" fill="#3a77b6"/><path d="M9.5 14.8H17M9.5 17.5H17" stroke="#3a77b6" stroke-width="1.3"/></svg>
<div class="t" style="left:1858px;top:98.88px;font-size:15.5px;color:#333333;transform:scaleX(0.9909);">Templates</div>
<svg style="left:1933px;top:104px;" width="9" height="6" viewBox="0 0 9 6"><path d="M1 1l3.5 3.5L8 1" fill="none" stroke="#444" stroke-width="1.4"/></svg>
<svg style="left:1832px;top:126px;" width="21" height="22" viewBox="0 0 21 22"><path d="M3 1v20M10 1v20M17 1v20" stroke="#b4b4b4" stroke-width="1.6"/><circle cx="3" cy="14" r="2.5" fill="#f3f2f1" stroke="#b4b4b4" stroke-width="1.5"/><circle cx="10" cy="6" r="2.5" fill="#f3f2f1" stroke="#b4b4b4" stroke-width="1.5"/><circle cx="17" cy="14" r="2.5" fill="#f3f2f1" stroke="#b4b4b4" stroke-width="1.5"/></svg>
<div class="t" style="left:1858px;top:129.88px;font-size:15.5px;color:#b0b0b0;transform:scaleX(1.0153);">Advanced</div>
<svg style="left:1933px;top:135px;" width="9" height="6" viewBox="0 0 9 6"><path d="M1 1l3.5 3.5L8 1" fill="none" stroke="#b0b0b0" stroke-width="1.4"/></svg>
<div class="t" style="left:1834px;top:198.28px;font-size:15.5px;color:#444;">Template Admin</div>
<svg style="left:1979px;top:95px;" width="21" height="21" viewBox="0 0 21 21"><circle cx="10.5" cy="10.5" r="9.3" fill="none" stroke="#3a77b6" stroke-width="1.7"/><path d="M7.5 8a3 3 0 1 1 4 3c-1 .5-1 1-1 2.5" fill="none" stroke="#3a77b6" stroke-width="1.7"/><circle cx="10.5" cy="16" r="1.1" fill="#3a77b6"/></svg>
<div class="t" style="left:2004.8px;top:98.88px;font-size:15.5px;color:#333333;transform:scaleX(1.0257);">Help</div>
<svg style="left:2043px;top:104px;" width="9" height="6" viewBox="0 0 9 6"><path d="M1 1l3.5 3.5L8 1" fill="none" stroke="#444" stroke-width="1.4"/></svg>
<svg style="left:1978px;top:125px;" width="24" height="24" viewBox="0 0 24 24"><path d="M7.76 3.72 L8.05 1.31 L10.95 1.31 L11.24 3.72 L13.06 4.47 L14.97 2.98 L17.02 5.03 L15.53 6.94 L16.28 8.76 L18.69 9.05 L18.69 11.95 L16.28 12.24 L15.53 14.06 L17.02 15.97 L14.97 18.02 L13.06 16.53 L11.24 17.28 L10.95 19.69 L8.05 19.69 L7.76 17.28 L5.94 16.53 L4.03 18.02 L1.98 15.97 L3.47 14.06 L2.72 12.24 L0.31 11.95 L0.31 9.05 L2.72 8.76 L3.47 6.94 L1.98 5.03 L4.03 2.98 L5.94 4.47Z" fill="none" stroke="#3a77b6" stroke-width="1.6" stroke-linejoin="round"/><circle cx="9.5" cy="10.5" r="3.2" fill="none" stroke="#3a77b6" stroke-width="1.4"/><path d="M8 23.5C8.5 17.5 11.5 15.5 15.5 15.5S22.5 17.5 23 23.5z" fill="#f3f2f1" stroke="#3a77b6" stroke-width="1.7"/><circle cx="15.5" cy="11" r="4" fill="#f3f2f1" stroke="#3a77b6" stroke-width="1.7"/></svg>
<div class="t" style="left:2004.8px;top:129.88px;font-size:15.5px;color:#333333;">Settings</div>
<svg style="left:2076px;top:135px;" width="9" height="6" viewBox="0 0 9 6"><path d="M1 1l3.5 3.5L8 1" fill="none" stroke="#444" stroke-width="1.4"/></svg>
<svg style="left:1979px;top:159px;" width="22" height="18" viewBox="0 0 22 18"><path d="M6 16.5a4.5 4.5 0 0 1-.5-9 6.5 6.5 0 0 1 12.5 1 4 4 0 0 1 0 8z" fill="none" stroke="#3a77b6" stroke-width="1.7"/></svg>
<div class="t" style="left:2004.8px;top:160.88px;font-size:15.5px;color:#333333;transform:scaleX(1.0690);">Home</div>
<div class="t" style="left:2011.8px;top:198.28px;font-size:15.5px;color:#444;transform:scaleX(1.0541);">About</div>
<svg style="left:2575px;top:203px;" width="13" height="8" viewBox="0 0 13 8"><path d="M1 7l5.5-5.5L12 7" fill="none" stroke="#444" stroke-width="1.5"/></svg>
<div style="left:8.5px;top:232px;width:137px;height:34px;background:#fff;border:1px solid #c6c6c6"></div>
<div class="t" style="left:18px;top:241.22px;font-size:16.5px;color:#262626;transform:scaleX(0.9909);">B2</div>
<svg style="left:127px;top:245px;" width="10" height="5.5" viewBox="0 0 10 5.5"><path d="M0 0h10L5 5.5z" fill="#6a6a6a"/></svg>
<div style="left:165px;top:243px;width:3px;height:3px;background:#9a9a9a;border-radius:1.5px"></div>
<div style="left:165px;top:249px;width:3px;height:3px;background:#9a9a9a;border-radius:1.5px"></div>
<div style="left:165px;top:255px;width:3px;height:3px;background:#9a9a9a;border-radius:1.5px"></div>
<div style="left:187px;top:232px;width:148px;height:34px;background:#fff;border:1px solid #c6c6c6"></div>
<svg style="left:205px;top:243px;" width="15" height="13" viewBox="0 0 15 13"><path d="M1 0.5l13 12M14 0.5L1 12.5" stroke="#9b9b9b" stroke-width="1.6"/></svg>
<svg style="left:252px;top:242px;" width="19" height="14" viewBox="0 0 19 14"><path d="M1 7l5 6L18 1" fill="none" stroke="#c4c4c4" stroke-width="2.4"/></svg>
<div class="t" style="left:301px;top:238px;font-family:'Liberation Serif';font-style:italic;font-size:19px;color:#444">f<span style="font-size:14px">x</span></div>
<div style="left:340px;top:232px;width:2252px;height:34px;background:#fff;border:1px solid #c6c6c6"></div>
<div class="t" style="left:356.7px;top:241.22px;font-size:16.5px;color:#262626;transform:scaleX(1.1260);">Product ID*</div>
<svg style="left:2577px;top:245px;" width="10" height="7" viewBox="0 0 10 7"><path d="M1 1l4 4.5L9 1" fill="none" stroke="#444" stroke-width="1.7"/></svg>
<div style="left:0px;top:280px;width:2570px;height:26px;background:#e6e6e6;"></div>
<div style="left:35px;top:280px;width:153px;height:26px;background:#d2d2d2;"></div>
<svg style="left:15px;top:285px;" width="16" height="16" viewBox="0 0 16 16"><path d="M15 1v14H1z" fill="#b9b9b9"/></svg>
<div style="left:187px;top:284px;width:1px;height:22px;background:#cfcfcf;"></div>
<div class="t" style="left:106.16375px;top:284.80px;font-size:16px;color:#2b4a3a;">B</div>
<div style="left:295px;top:284px;width:1px;height:22px;background:#cfcfcf;"></div>
<div class="t" style="left:236.2225px;top:284.80px;font-size:16px;color:#3a3a3a;">C</div>
<div style="left:407px;top:284px;width:1px;height:22px;background:#cfcfcf;"></div>
<div class="t" style="left:346.2225px;top:284.80px;font-size:16px;color:#3a3a3a;">D</div>
<div style="left:534px;top:284px;width:1px;height:22px;background:#cfcfcf;"></div>
<div class="t" style="left:466.16375px;top:284.80px;font-size:16px;color:#3a3a3a;">E</div>
<div style="left:776px;top:284px;width:1px;height:22px;background:#cfcfcf;"></div>
<div class="t" style="left:651.113125px;top:284.80px;font-size:16px;color:#3a3a3a;">F</div>
<div style="left:902px;top:284px;width:1px;height:22px;background:#cfcfcf;"></div>
<div class="t" style="left:833.7775px;top:284.80px;font-size:16px;color:#3a3a3a;">G</div>
<div style="left:1118px;top:284px;width:1px;height:22px;background:#cfcfcf;"></div>
<div class="t" style="left:1005.2225px;top:284.80px;font-size:16px;color:#3a3a3a;">H</div>
<div style="left:1217px;top:284px;width:1px;height:22px;background:#cfcfcf;"></div>
<div class="t" style="left:1166.2775px;top:284.80px;font-size:16px;color:#3a3a3a;">I</div>
<div style="left:1327px;top:284px;width:1px;height:22px;background:#cfcfcf;"></div>
<div class="t" style="left:1269.0px;top:284.80px;font-size:16px;color:#3a3a3a;">J</div>
<div style="left:1438px;top:284px;width:1px;height:22px;background:#cfcfcf;"></div>
<div class="t" style="left:1378.16375px;top:284.80px;font-size:16px;color:#3a3a3a;">K</div>
<div style="left:1513px;top:284px;width:1px;height:22px;background:#cfcfcf;"></div>
<div class="t" style="left:1472.050625px;top:284.80px;font-size:16px;color:#3a3a3a;">L</div>
<div style="left:1629px;top:284px;width:1px;height:22px;background:#cfcfcf;"></div>
<div class="t" style="left:1565.335625px;top:284.80px;font-size:16px;color:#3a3a3a;">M</div>
<div style="left:1907px;top:284px;width:1px;height:22px;background:#cfcfcf;"></div>
<div class="t" style="left:1763.2225px;top:284.80px;font-size:16px;color:#3a3a3a;">N</div>
<div style="left:2077px;top:284px;width:1px;height:22px;background:#cfcfcf;"></div>
<div class="t" style="left:1986.7775px;top:284.80px;font-size:16px;color:#3a3a3a;">O</div>
<div style="left:2201px;top:284px;width:1px;height:22px;background:#cfcfcf;"></div>
<div class="t" style="left:2134.66375px;top:284.80px;font-size:16px;color:#3a3a3a;">P</div>
<div class="t" style="left:2461.2775px;top:284.80px;font-size:16px;color:#3a3a3a;">Q</div>
<div style="left:0px;top:305px;width:2570px;height:1.3px;background:#bdbdbd;"></div>
<div style="left:35px;top:306px;width:2535px;height:72px;background:#f2f2f2;"></div>
<div style="left:0px;top:306px;width:35px;height:72px;background:#d2d2d2;"></div>
<div class="t" style="left:12px;top:358.60px;font-size:16px;color:#2b4a3a;">2</div>
<div style="left:0px;top:377px;width:2570px;height:1.5px;background:#b4b4b4;"></div>
<div class="t" style="left:39.8px;top:335.48px;font-size:16.8px;color:#000;font-weight:bold;transform:scaleX(1.0125);">Product ID</div>
<div class="t" style="left:191.2px;top:335.48px;font-size:16.8px;color:#000;font-weight:bold;transform:scaleX(0.9455);">ABC Desc</div>
<div class="t" style="left:299.3px;top:335.48px;font-size:16.8px;color:#000;font-weight:bold;transform:scaleX(0.9715);">ABC Code</div>
<div class="t" style="left:411.5px;top:335.48px;font-size:16.8px;color:#000;font-weight:bold;transform:scaleX(0.9541);">ABC Locked</div>
<div class="t" style="left:538.8px;top:335.48px;font-size:16.8px;color:#000;font-weight:bold;transform:scaleX(0.9374);">ABCXYZCOUNTERHELPER</div>
<div class="t" style="left:780.7px;top:335.48px;font-size:16.8px;color:#000;font-weight:bold;transform:scaleX(1.0085);">Brand ID</div>
<div class="t" style="left:906.5px;top:335.48px;font-size:16.8px;color:#000;font-weight:bold;transform:scaleX(1.0272);">Category</div>
<div class="t" style="left:1122px;top:335.48px;font-size:16.8px;color:#000;font-weight:bold;">Brand</div>
<div class="t" style="left:1222.4px;top:335.48px;font-size:16.8px;color:#000;font-weight:bold;transform:scaleX(1.0051);">Design</div>
<div class="t" style="left:1331.8px;top:335.48px;font-size:16.8px;color:#000;font-weight:bold;transform:scaleX(1.0606);">Quality</div>
<div class="t" style="left:1442.5px;top:335.48px;font-size:16.8px;color:#000;font-weight:bold;">Size</div>
<div class="t" style="left:1517px;top:335.48px;font-size:16.8px;color:#000;font-weight:bold;transform:scaleX(1.0887);">Variant</div>
<div class="t" style="left:1633.8px;top:335.48px;font-size:16.8px;color:#000;font-weight:bold;transform:scaleX(1.0453);">Item Type Category Indicator</div>
<div class="t" style="left:1911.7px;top:335.48px;font-size:16.8px;color:#000;font-weight:bold;transform:scaleX(1.0776);">Material Type ID</div>
<div class="t" style="left:2082px;top:335.48px;font-size:16.8px;color:#000;font-weight:bold;">PLM Status</div>
<div class="t" style="left:2204.8px;top:335.48px;font-size:16.8px;color:#000;font-weight:bold;">Product Desc</div>
<div class="t" style="left:126.5px;top:335.35px;font-size:13px;color:#e83030;transform:scaleX(1.4826);">*</div>
<div style="left:164px;top:354px;width:22px;height:22px;border:1px solid #c3c3c3;background:linear-gradient(#ffffff,#eef0f4)"></div>
<svg style="left:170px;top:363px;" width="10" height="5.5" viewBox="0 0 10 5.5"><path d="M0 0h10L5 5.5z" fill="#5f5f5f"/></svg>
<svg style="left:180px;top:308.5px;" width="5.5" height="5.5" viewBox="0 0 5.5 5.5"><path d="M0 0h5.5v5.5z" fill="#ff1010"/></svg>
<div style="left:273px;top:354px;width:22px;height:22px;border:1px solid #c3c3c3;background:linear-gradient(#ffffff,#eef0f4)"></div>
<svg style="left:279px;top:363px;" width="10" height="5.5" viewBox="0 0 10 5.5"><path d="M0 0h10L5 5.5z" fill="#5f5f5f"/></svg>
<svg style="left:287.5px;top:306.5px;" width="8.5" height="8.5" viewBox="0 0 8.5 8.5"><path d="M0 0h8.5v8.5z" fill="#ff1010"/></svg>
<div style="left:385px;top:354px;width:22px;height:22px;border:1px solid #c3c3c3;background:linear-gradient(#ffffff,#eef0f4)"></div>
<svg style="left:391px;top:363px;" width="10" height="5.5" viewBox="0 0 10 5.5"><path d="M0 0h10L5 5.5z" fill="#5f5f5f"/></svg>
<svg style="left:399.5px;top:306.5px;" width="8.5" height="8.5" viewBox="0 0 8.5 8.5"><path d="M0 0h8.5v8.5z" fill="#ff1010"/></svg>
<div style="left:512px;top:354px;width:22px;height:22px;border:1px solid #c3c3c3;background:linear-gradient(#ffffff,#eef0f4)"></div>
<svg style="left:518px;top:363px;" width="10" height="5.5" viewBox="0 0 10 5.5"><path d="M0 0h10L5 5.5z" fill="#5f5f5f"/></svg>
<svg style="left:526.5px;top:306.5px;" width="8.5" height="8.5" viewBox="0 0 8.5 8.5"><path d="M0 0h8.5v8.5z" fill="#ff1010"/></svg>
<div style="left:754px;top:354px;width:22px;height:22px;border:1px solid #c3c3c3;background:linear-gradient(#ffffff,#eef0f4)"></div>
<svg style="left:760px;top:363px;" width="10" height="5.5" viewBox="0 0 10 5.5"><path d="M0 0h10L5 5.5z" fill="#5f5f5f"/></svg>
<svg style="left:768.5px;top:306.5px;" width="8.5" height="8.5" viewBox="0 0 8.5 8.5"><path d="M0 0h8.5v8.5z" fill="#ff1010"/></svg>
<div style="left:880px;top:354px;width:22px;height:22px;border:1px solid #c3c3c3;background:linear-gradient(#ffffff,#eef0f4)"></div>
<svg style="left:886px;top:363px;" width="10" height="5.5" viewBox="0 0 10 5.5"><path d="M0 0h10L5 5.5z" fill="#5f5f5f"/></svg>
<svg style="left:894.5px;top:306.5px;" width="8.5" height="8.5" viewBox="0 0 8.5 8.5"><path d="M0 0h8.5v8.5z" fill="#ff1010"/></svg>
<div style="left:1096px;top:354px;width:22px;height:22px;border:1px solid #c3c3c3;background:linear-gradient(#ffffff,#eef0f4)"></div>
<svg style="left:1102px;top:363px;" width="10" height="5.5" viewBox="0 0 10 5.5"><path d="M0 0h10L5 5.5z" fill="#5f5f5f"/></svg>
<svg style="left:1110.5px;top:306.5px;" width="8.5" height="8.5" viewBox="0 0 8.5 8.5"><path d="M0 0h8.5v8.5z" fill="#ff1010"/></svg>
<div style="left:1195px;top:354px;width:22px;height:22px;border:1px solid #c3c3c3;background:linear-gradient(#ffffff,#eef0f4)"></div>
<svg style="left:1201px;top:363px;" width="10" height="5.5" viewBox="0 0 10 5.5"><path d="M0 0h10L5 5.5z" fill="#5f5f5f"/></svg>
<svg style="left:1209.5px;top:306.5px;" width="8.5" height="8.5" viewBox="0 0 8.5 8.5"><path d="M0 0h8.5v8.5z" fill="#ff1010"/></svg>
<div style="left:1305px;top:354px;width:22px;height:22px;border:1px solid #c3c3c3;background:linear-gradient(#ffffff,#eef0f4)"></div>
<svg style="left:1311px;top:363px;" width="10" height="5.5" viewBox="0 0 10 5.5"><path d="M0 0h10L5 5.5z" fill="#5f5f5f"/></svg>
<svg style="left:1319.5px;top:306.5px;" width="8.5" height="8.5" viewBox="0 0 8.5 8.5"><path d="M0 0h8.5v8.5z" fill="#ff1010"/></svg>
<div style="left:1416px;top:354px;width:22px;height:22px;border:1px solid #c3c3c3;background:linear-gradient(#ffffff,#eef0f4)"></div>
<svg style="left:1422px;top:363px;" width="10" height="5.5" viewBox="0 0 10 5.5"><path d="M0 0h10L5 5.5z" fill="#5f5f5f"/></svg>
<svg style="left:1430.5px;top:306.5px;" width="8.5" height="8.5" viewBox="0 0 8.5 8.5"><path d="M0 0h8.5v8.5z" fill="#ff1010"/></svg>
<div style="left:1491px;top:354px;width:22px;height:22px;border:1px solid #c3c3c3;background:linear-gradient(#ffffff,#eef0f4)"></div>
<svg style="left:1497px;top:363px;" width="10" height="5.5" viewBox="0 0 10 5.5"><path d="M0 0h10L5 5.5z" fill="#5f5f5f"/></svg>
<svg style="left:1505.5px;top:306.5px;" width="8.5" height="8.5" viewBox="0 0 8.5 8.5"><path d="M0 0h8.5v8.5z" fill="#ff1010"/></svg>
<div style="left:1607px;top:354px;width:22px;height:22px;border:1px solid #c3c3c3;background:linear-gradient(#ffffff,#eef0f4)"></div>
<svg style="left:1613px;top:363px;" width="10" height="5.5" viewBox="0 0 10 5.5"><path d="M0 0h10L5 5.5z" fill="#5f5f5f"/></svg>
<svg style="left:1621.5px;top:306.5px;" width="8.5" height="8.5" viewBox="0 0 8.5 8.5"><path d="M0 0h8.5v8.5z" fill="#ff1010"/></svg>
<div style="left:1885px;top:354px;width:22px;height:22px;border:1px solid #c3c3c3;background:linear-gradient(#ffffff,#eef0f4)"></div>
<svg style="left:1891px;top:363px;" width="10" height="5.5" viewBox="0 0 10 5.5"><path d="M0 0h10L5 5.5z" fill="#5f5f5f"/></svg>
<svg style="left:1899.5px;top:306.5px;" width="8.5" height="8.5" viewBox="0 0 8.5 8.5"><path d="M0 0h8.5v8.5z" fill="#ff1010"/></svg>
<div style="left:2055px;top:354px;width:22px;height:22px;border:1px solid #c3c3c3;background:linear-gradient(#ffffff,#eef0f4)"></div>
<svg style="left:2061px;top:363px;" width="10" height="5.5" viewBox="0 0 10 5.5"><path d="M0 0h10L5 5.5z" fill="#5f5f5f"/></svg>
<svg style="left:2069.5px;top:306.5px;" width="8.5" height="8.5" viewBox="0 0 8.5 8.5"><path d="M0 0h8.5v8.5z" fill="#ff1010"/></svg>
<div style="left:2179px;top:354px;width:22px;height:22px;border:1px solid #c3c3c3;background:linear-gradient(#ffffff,#eef0f4)"></div>
<svg style="left:2185px;top:363px;" width="10" height="5.5" viewBox="0 0 10 5.5"><path d="M0 0h10L5 5.5z" fill="#5f5f5f"/></svg>
<svg style="left:2193.5px;top:306.5px;" width="8.5" height="8.5" viewBox="0 0 8.5 8.5"><path d="M0 0h8.5v8.5z" fill="#ff1010"/></svg>
<div style="left:0;top:378px;width:2570px;height:962px;overflow:hidden">
<div style="position:absolute;left:0;top:0;width:35px;height:962px;background:#e6e6e6"></div>
<div style="position:absolute;left:35px;top:0;width:57px;height:962px;background:#f2f2f2"></div>
<div style="position:absolute;left:92px;top:0;width:152px;height:962px;background:#ffcc5e"></div>
<div style="position:absolute;left:34px;top:0;width:1.5px;height:962px;background:#c4c4c4"></div>
<div style="position:absolute;left:0;top:26.05px;width:35px;height:1.2px;background:#c8c8c8"></div>
<div class="t" style="position:absolute;left:14.1062421875px;top:8.03px;font-size:15.8px;color:#333;">3</div>
<div class="t" style="position:absolute;left:79.8231640625px;top:6.72px;font-size:16.5px;color:#ffffff;">1</div>
<div style="position:absolute;left:93.5px;top:1.30px;width:0;height:0;border-top:7px solid #0a7a0a;border-right:8px solid transparent"></div>
<div class="t" style="position:absolute;left:96px;top:6.65px;font-size:17px;color:#000;transform:scaleX(0.9989);">000001000</div>
<div class="t" style="position:absolute;left:838.3px;top:6.65px;font-size:17px;color:#000;transform:scaleX(1.1592);">Implement</div>
<div class="t" style="position:absolute;left:964px;top:6.65px;font-size:17px;color:#000;transform:scaleX(1.0702);">Products</div>
<div class="t" style="position:absolute;left:1179.5px;top:6.65px;font-size:17px;color:#000;transform:scaleX(1.0762);">IM_</div>
<div class="t" style="position:absolute;left:1966.8px;top:6.65px;font-size:17px;color:#000;transform:scaleX(1.0340);">FINI</div>
<div class="t" style="position:absolute;left:2137.6px;top:6.65px;font-size:17px;color:#000;transform:scaleX(1.1173);">New</div>
<div class="t" style="position:absolute;left:2260.7px;top:6.65px;font-size:17px;color:#000;transform:scaleX(1.0852);">Product1</div>
<div style="position:absolute;left:0;top:53.10px;width:35px;height:1.2px;background:#c8c8c8"></div>
<div class="t" style="position:absolute;left:14.1062421875px;top:35.08px;font-size:15.8px;color:#333;">4</div>
<div class="t" style="position:absolute;left:79.8231640625px;top:33.77px;font-size:16.5px;color:#ffffff;">2</div>
<div style="position:absolute;left:93.5px;top:28.35px;width:0;height:0;border-top:7px solid #0a7a0a;border-right:8px solid transparent"></div>
<div class="t" style="position:absolute;left:96px;top:33.70px;font-size:17px;color:#000;transform:scaleX(0.9989);">000001001</div>
<div class="t" style="position:absolute;left:838.3px;top:33.70px;font-size:17px;color:#000;transform:scaleX(1.1592);">Implement</div>
<div class="t" style="position:absolute;left:964px;top:33.70px;font-size:17px;color:#000;transform:scaleX(1.0702);">Products</div>
<div class="t" style="position:absolute;left:1179.5px;top:33.70px;font-size:17px;color:#000;transform:scaleX(1.0762);">IM_</div>
<div class="t" style="position:absolute;left:1966.8px;top:33.70px;font-size:17px;color:#000;transform:scaleX(1.0340);">FINI</div>
<div class="t" style="position:absolute;left:2137.6px;top:33.70px;font-size:17px;color:#000;transform:scaleX(1.1038);">Old</div>
<div class="t" style="position:absolute;left:2260.7px;top:33.70px;font-size:17px;color:#000;transform:scaleX(1.0852);">Product2</div>
<div style="position:absolute;left:0;top:80.15px;width:35px;height:1.2px;background:#c8c8c8"></div>
<div class="t" style="position:absolute;left:14.1062421875px;top:62.13px;font-size:15.8px;color:#333;">5</div>
<div class="t" style="position:absolute;left:79.8231640625px;top:60.82px;font-size:16.5px;color:#ffffff;">3</div>
<div style="position:absolute;left:93.5px;top:55.40px;width:0;height:0;border-top:7px solid #0a7a0a;border-right:8px solid transparent"></div>
<div class="t" style="position:absolute;left:96px;top:60.75px;font-size:17px;color:#000;transform:scaleX(0.9989);">000001002</div>
<div class="t" style="position:absolute;left:356px;top:60.75px;font-size:17px;color:#000;transform:scaleX(0.8552);">C</div>
<div class="t" style="position:absolute;left:838.3px;top:60.75px;font-size:17px;color:#000;transform:scaleX(1.1592);">Implement</div>
<div class="t" style="position:absolute;left:964px;top:60.75px;font-size:17px;color:#000;transform:scaleX(1.0702);">Products</div>
<div class="t" style="position:absolute;left:1179.5px;top:60.75px;font-size:17px;color:#000;transform:scaleX(1.0762);">IM_</div>
<div class="t" style="position:absolute;left:1966.8px;top:60.75px;font-size:17px;color:#000;transform:scaleX(1.0340);">FINI</div>
<div class="t" style="position:absolute;left:2260.7px;top:60.75px;font-size:17px;color:#000;transform:scaleX(1.0852);">Product3</div>
<div style="position:absolute;left:0;top:107.20px;width:35px;height:1.2px;background:#c8c8c8"></div>
<div class="t" style="position:absolute;left:14.1062421875px;top:89.18px;font-size:15.8px;color:#333;">6</div>
<div class="t" style="position:absolute;left:79.8231640625px;top:87.87px;font-size:16.5px;color:#ffffff;">4</div>
<div style="position:absolute;left:93.5px;top:82.45px;width:0;height:0;border-top:7px solid #0a7a0a;border-right:8px solid transparent"></div>
<div class="t" style="position:absolute;left:96px;top:87.80px;font-size:17px;color:#000;transform:scaleX(0.9989);">000001003</div>
<div class="t" style="position:absolute;left:356px;top:87.80px;font-size:17px;color:#000;transform:scaleX(0.8552);">C</div>
<div class="t" style="position:absolute;left:838.3px;top:87.80px;font-size:17px;color:#000;transform:scaleX(1.1592);">Implement</div>
<div class="t" style="position:absolute;left:964px;top:87.80px;font-size:17px;color:#000;transform:scaleX(1.0702);">Products</div>
<div class="t" style="position:absolute;left:1179.5px;top:87.80px;font-size:17px;color:#000;transform:scaleX(1.0762);">IM_</div>
<div class="t" style="position:absolute;left:1966.8px;top:87.80px;font-size:17px;color:#000;transform:scaleX(1.0340);">FINI</div>
<div class="t" style="position:absolute;left:2260.7px;top:87.80px;font-size:17px;color:#000;transform:scaleX(1.0852);">Product4</div>
<div style="position:absolute;left:0;top:134.25px;width:35px;height:1.2px;background:#c8c8c8"></div>
<div class="t" style="position:absolute;left:14.1062421875px;top:116.23px;font-size:15.8px;color:#333;">7</div>
<div class="t" style="position:absolute;left:79.8231640625px;top:114.92px;font-size:16.5px;color:#ffffff;">5</div>
<div style="position:absolute;left:93.5px;top:109.50px;width:0;height:0;border-top:7px solid #0a7a0a;border-right:8px solid transparent"></div>
<div class="t" style="position:absolute;left:96px;top:114.85px;font-size:17px;color:#000;transform:scaleX(0.9989);">000001004</div>
<div class="t" style="position:absolute;left:838.3px;top:114.85px;font-size:17px;color:#000;transform:scaleX(1.1592);">Implement</div>
<div class="t" style="position:absolute;left:964px;top:114.85px;font-size:17px;color:#000;transform:scaleX(1.0702);">Products</div>
<div class="t" style="position:absolute;left:1179.5px;top:114.85px;font-size:17px;color:#000;transform:scaleX(1.0762);">IM_</div>
<div class="t" style="position:absolute;left:1966.8px;top:114.85px;font-size:17px;color:#000;transform:scaleX(1.0340);">FINI</div>
<div class="t" style="position:absolute;left:2260.7px;top:114.85px;font-size:17px;color:#000;transform:scaleX(1.0852);">Product5</div>
<div style="position:absolute;left:0;top:161.30px;width:35px;height:1.2px;background:#c8c8c8"></div>
<div class="t" style="position:absolute;left:14.1062421875px;top:143.28px;font-size:15.8px;color:#333;">8</div>
<div class="t" style="position:absolute;left:79.8231640625px;top:141.98px;font-size:16.5px;color:#ffffff;">6</div>
<div style="position:absolute;left:93.5px;top:136.55px;width:0;height:0;border-top:7px solid #0a7a0a;border-right:8px solid transparent"></div>
<div class="t" style="position:absolute;left:96px;top:141.90px;font-size:17px;color:#000;transform:scaleX(0.9989);">000001005</div>
<div class="t" style="position:absolute;left:838.3px;top:141.90px;font-size:17px;color:#000;transform:scaleX(1.1592);">Implement</div>
<div class="t" style="position:absolute;left:964px;top:141.90px;font-size:17px;color:#000;transform:scaleX(1.0702);">Products</div>
<div class="t" style="position:absolute;left:1179.5px;top:141.90px;font-size:17px;color:#000;transform:scaleX(1.0762);">IM_</div>
<div class="t" style="position:absolute;left:1966.8px;top:141.90px;font-size:17px;color:#000;transform:scaleX(1.0340);">FINI</div>
<div class="t" style="position:absolute;left:2260.7px;top:141.90px;font-size:17px;color:#000;transform:scaleX(1.0852);">Product6</div>
<div style="position:absolute;left:0;top:188.35px;width:35px;height:1.2px;background:#c8c8c8"></div>
<div class="t" style="position:absolute;left:14.1062421875px;top:170.33px;font-size:15.8px;color:#333;">9</div>
<div class="t" style="position:absolute;left:79.8231640625px;top:169.02px;font-size:16.5px;color:#ffffff;">7</div>
<div style="position:absolute;left:93.5px;top:163.60px;width:0;height:0;border-top:7px solid #0a7a0a;border-right:8px solid transparent"></div>
<div class="t" style="position:absolute;left:96px;top:168.95px;font-size:17px;color:#000;transform:scaleX(0.9989);">000001007</div>
<div class="t" style="position:absolute;left:838.3px;top:168.95px;font-size:17px;color:#000;transform:scaleX(1.1592);">Implement</div>
<div class="t" style="position:absolute;left:964px;top:168.95px;font-size:17px;color:#000;transform:scaleX(1.0702);">Products</div>
<div class="t" style="position:absolute;left:1179.5px;top:168.95px;font-size:17px;color:#000;transform:scaleX(1.0762);">IM_</div>
<div class="t" style="position:absolute;left:1966.8px;top:168.95px;font-size:17px;color:#000;transform:scaleX(1.0340);">FINI</div>
<div class="t" style="position:absolute;left:2260.7px;top:168.95px;font-size:17px;color:#000;transform:scaleX(1.0852);">Product7</div>
<div style="position:absolute;left:0;top:215.40px;width:35px;height:1.2px;background:#c8c8c8"></div>
<div class="t" style="position:absolute;left:9.712484374999999px;top:197.38px;font-size:15.8px;color:#333;">10</div>
<div class="t" style="position:absolute;left:79.8231640625px;top:196.08px;font-size:16.5px;color:#ffffff;">8</div>
<div style="position:absolute;left:93.5px;top:190.65px;width:0;height:0;border-top:7px solid #0a7a0a;border-right:8px solid transparent"></div>
<div class="t" style="position:absolute;left:96px;top:196.00px;font-size:17px;color:#000;transform:scaleX(0.9989);">000001014</div>
<div class="t" style="position:absolute;left:838.3px;top:196.00px;font-size:17px;color:#000;transform:scaleX(1.1592);">Implement</div>
<div class="t" style="position:absolute;left:964px;top:196.00px;font-size:17px;color:#000;transform:scaleX(1.0702);">Products</div>
<div class="t" style="position:absolute;left:1179.5px;top:196.00px;font-size:17px;color:#000;transform:scaleX(1.0762);">IM_</div>
<div class="t" style="position:absolute;left:1966.8px;top:196.00px;font-size:17px;color:#000;transform:scaleX(1.0340);">FINI</div>
<div class="t" style="position:absolute;left:2260.7px;top:196.00px;font-size:17px;color:#000;transform:scaleX(1.0852);">Product8</div>
<div style="position:absolute;left:0;top:242.45px;width:35px;height:1.2px;background:#c8c8c8"></div>
<div class="t" style="position:absolute;left:10.298812499999999px;top:224.43px;font-size:15.8px;color:#333;">11</div>
<div class="t" style="position:absolute;left:79.8231640625px;top:223.12px;font-size:16.5px;color:#ffffff;">9</div>
<div style="position:absolute;left:93.5px;top:217.70px;width:0;height:0;border-top:7px solid #0a7a0a;border-right:8px solid transparent"></div>
<div class="t" style="position:absolute;left:96px;top:223.05px;font-size:17px;color:#000;transform:scaleX(0.9989);">000001015</div>
<div class="t" style="position:absolute;left:838.3px;top:223.05px;font-size:17px;color:#000;transform:scaleX(1.1592);">Implement</div>
<div class="t" style="position:absolute;left:964px;top:223.05px;font-size:17px;color:#000;transform:scaleX(1.0702);">Products</div>
<div class="t" style="position:absolute;left:1179.5px;top:223.05px;font-size:17px;color:#000;transform:scaleX(1.0762);">IM_</div>
<div class="t" style="position:absolute;left:1966.8px;top:223.05px;font-size:17px;color:#000;transform:scaleX(1.0340);">FINI</div>
<div class="t" style="position:absolute;left:2260.7px;top:223.05px;font-size:17px;color:#000;transform:scaleX(1.0852);">Product9</div>
<div style="position:absolute;left:0;top:269.50px;width:35px;height:1.2px;background:#c8c8c8"></div>
<div class="t" style="position:absolute;left:9.712484374999999px;top:251.48px;font-size:15.8px;color:#333;">12</div>
<div class="t" style="position:absolute;left:70.646328125px;top:250.18px;font-size:16.5px;color:#ffffff;">10</div>
<div style="position:absolute;left:93.5px;top:244.75px;width:0;height:0;border-top:7px solid #0a7a0a;border-right:8px solid transparent"></div>
<div class="t" style="position:absolute;left:96px;top:250.10px;font-size:17px;color:#000;transform:scaleX(0.9989);">000001016</div>
<div class="t" style="position:absolute;left:838.3px;top:250.10px;font-size:17px;color:#000;transform:scaleX(1.1592);">Implement</div>
<div class="t" style="position:absolute;left:964px;top:250.10px;font-size:17px;color:#000;transform:scaleX(1.0702);">Products</div>
<div class="t" style="position:absolute;left:1179.5px;top:250.10px;font-size:17px;color:#000;transform:scaleX(1.0762);">IM_</div>
<div class="t" style="position:absolute;left:1966.8px;top:250.10px;font-size:17px;color:#000;transform:scaleX(1.0340);">FINI</div>
<div class="t" style="position:absolute;left:2260.7px;top:250.10px;font-size:17px;color:#000;transform:scaleX(1.0746);">Product10</div>
<div style="position:absolute;left:0;top:296.55px;width:35px;height:1.2px;background:#c8c8c8"></div>
<div class="t" style="position:absolute;left:9.712484374999999px;top:278.53px;font-size:15.8px;color:#333;">13</div>
<div class="t" style="position:absolute;left:71.8709375px;top:277.23px;font-size:16.5px;color:#ffffff;">11</div>
<div style="position:absolute;left:93.5px;top:271.80px;width:0;height:0;border-top:7px solid #0a7a0a;border-right:8px solid transparent"></div>
<div class="t" style="position:absolute;left:96px;top:277.15px;font-size:17px;color:#000;transform:scaleX(0.9989);">000001017</div>
<div class="t" style="position:absolute;left:356px;top:277.15px;font-size:17px;color:#000;transform:scaleX(0.8552);">C</div>
<div class="t" style="position:absolute;left:838.3px;top:277.15px;font-size:17px;color:#000;transform:scaleX(1.1592);">Implement</div>
<div class="t" style="position:absolute;left:964px;top:277.15px;font-size:17px;color:#000;transform:scaleX(1.0702);">Products</div>
<div class="t" style="position:absolute;left:1179.5px;top:277.15px;font-size:17px;color:#000;transform:scaleX(1.0762);">IM_</div>
<div class="t" style="position:absolute;left:1966.8px;top:277.15px;font-size:17px;color:#000;transform:scaleX(1.0340);">FINI</div>
<div class="t" style="position:absolute;left:2260.7px;top:277.15px;font-size:17px;color:#000;transform:scaleX(1.0924);">Product11</div>
<div style="position:absolute;left:0;top:323.60px;width:35px;height:1.2px;background:#c8c8c8"></div>
<div class="t" style="position:absolute;left:9.712484374999999px;top:305.58px;font-size:15.8px;color:#333;">14</div>
<div class="t" style="position:absolute;left:70.646328125px;top:304.27px;font-size:16.5px;color:#ffffff;">12</div>
<div style="position:absolute;left:93.5px;top:298.85px;width:0;height:0;border-top:7px solid #0a7a0a;border-right:8px solid transparent"></div>
<div class="t" style="position:absolute;left:96px;top:304.20px;font-size:17px;color:#000;transform:scaleX(0.9989);">000001018</div>
<div class="t" style="position:absolute;left:356px;top:304.20px;font-size:17px;color:#000;transform:scaleX(0.9701);">A</div>
<div class="t" style="position:absolute;left:838.3px;top:304.20px;font-size:17px;color:#000;transform:scaleX(1.1592);">Implement</div>
<div class="t" style="position:absolute;left:964px;top:304.20px;font-size:17px;color:#000;transform:scaleX(1.0702);">Products</div>
<div class="t" style="position:absolute;left:1179.5px;top:304.20px;font-size:17px;color:#000;transform:scaleX(1.0762);">IM_</div>
<div class="t" style="position:absolute;left:1966.8px;top:304.20px;font-size:17px;color:#000;transform:scaleX(1.0340);">FINI</div>
<div class="t" style="position:absolute;left:2260.7px;top:304.20px;font-size:17px;color:#000;transform:scaleX(1.0746);">Product12</div>
<div style="position:absolute;left:0;top:350.65px;width:35px;height:1.2px;background:#c8c8c8"></div>
<div class="t" style="position:absolute;left:9.712484374999999px;top:332.63px;font-size:15.8px;color:#333;">15</div>
<div class="t" style="position:absolute;left:70.646328125px;top:331.33px;font-size:16.5px;color:#ffffff;">13</div>
<div style="position:absolute;left:93.5px;top:325.90px;width:0;height:0;border-top:7px solid #0a7a0a;border-right:8px solid transparent"></div>
<div class="t" style="position:absolute;left:96px;top:331.25px;font-size:17px;color:#000;transform:scaleX(0.9989);">000001019</div>
<div class="t" style="position:absolute;left:838.3px;top:331.25px;font-size:17px;color:#000;transform:scaleX(1.1592);">Implement</div>
<div class="t" style="position:absolute;left:964px;top:331.25px;font-size:17px;color:#000;transform:scaleX(1.0702);">Products</div>
<div class="t" style="position:absolute;left:1179.5px;top:331.25px;font-size:17px;color:#000;transform:scaleX(1.0762);">IM_</div>
<div class="t" style="position:absolute;left:1966.8px;top:331.25px;font-size:17px;color:#000;transform:scaleX(1.0340);">FINI</div>
<div class="t" style="position:absolute;left:2260.7px;top:331.25px;font-size:17px;color:#000;transform:scaleX(1.0746);">Product13</div>
<div style="position:absolute;left:0;top:377.70px;width:35px;height:1.2px;background:#c8c8c8"></div>
<div class="t" style="position:absolute;left:9.712484374999999px;top:359.68px;font-size:15.8px;color:#333;">16</div>
<div class="t" style="position:absolute;left:70.646328125px;top:358.38px;font-size:16.5px;color:#ffffff;">14</div>
<div style="position:absolute;left:93.5px;top:352.95px;width:0;height:0;border-top:7px solid #0a7a0a;border-right:8px solid transparent"></div>
<div class="t" style="position:absolute;left:96px;top:358.30px;font-size:17px;color:#000;transform:scaleX(0.9989);">000001020</div>
<div class="t" style="position:absolute;left:838.3px;top:358.30px;font-size:17px;color:#000;transform:scaleX(1.1592);">Implement</div>
<div class="t" style="position:absolute;left:964px;top:358.30px;font-size:17px;color:#000;transform:scaleX(1.0702);">Products</div>
<div class="t" style="position:absolute;left:1179.5px;top:358.30px;font-size:17px;color:#000;transform:scaleX(1.0762);">IM_</div>
<div class="t" style="position:absolute;left:1966.8px;top:358.30px;font-size:17px;color:#000;transform:scaleX(1.0340);">FINI</div>
<div class="t" style="position:absolute;left:2260.7px;top:358.30px;font-size:17px;color:#000;transform:scaleX(1.0746);">Product14</div>
<div style="position:absolute;left:0;top:404.75px;width:35px;height:1.2px;background:#c8c8c8"></div>
<div class="t" style="position:absolute;left:9.712484374999999px;top:386.73px;font-size:15.8px;color:#333;">17</div>
<div class="t" style="position:absolute;left:70.646328125px;top:385.43px;font-size:16.5px;color:#ffffff;">15</div>
<div style="position:absolute;left:93.5px;top:380.00px;width:0;height:0;border-top:7px solid #0a7a0a;border-right:8px solid transparent"></div>
<div class="t" style="position:absolute;left:96px;top:385.35px;font-size:17px;color:#000;transform:scaleX(0.9989);">000001024</div>
<div class="t" style="position:absolute;left:838.3px;top:385.35px;font-size:17px;color:#000;transform:scaleX(1.1592);">Implement</div>
<div class="t" style="position:absolute;left:964px;top:385.35px;font-size:17px;color:#000;transform:scaleX(1.0702);">Products</div>
<div class="t" style="position:absolute;left:1179.5px;top:385.35px;font-size:17px;color:#000;transform:scaleX(1.0762);">IM_</div>
<div class="t" style="position:absolute;left:1966.8px;top:385.35px;font-size:17px;color:#000;transform:scaleX(1.0340);">FINI</div>
<div class="t" style="position:absolute;left:2260.7px;top:385.35px;font-size:17px;color:#000;transform:scaleX(1.0746);">Product15</div>
<div style="position:absolute;left:0;top:431.80px;width:35px;height:1.2px;background:#c8c8c8"></div>
<div class="t" style="position:absolute;left:9.712484374999999px;top:413.78px;font-size:15.8px;color:#333;">18</div>
<div class="t" style="position:absolute;left:70.646328125px;top:412.48px;font-size:16.5px;color:#ffffff;">16</div>
<div style="position:absolute;left:93.5px;top:407.05px;width:0;height:0;border-top:7px solid #0a7a0a;border-right:8px solid transparent"></div>
<div class="t" style="position:absolute;left:96px;top:412.40px;font-size:17px;color:#000;transform:scaleX(0.9989);">000001025</div>
<div class="t" style="position:absolute;left:838.3px;top:412.40px;font-size:17px;color:#000;transform:scaleX(1.1592);">Implement</div>
<div class="t" style="position:absolute;left:964px;top:412.40px;font-size:17px;color:#000;transform:scaleX(1.0702);">Products</div>
<div class="t" style="position:absolute;left:1179.5px;top:412.40px;font-size:17px;color:#000;transform:scaleX(1.0762);">IM_</div>
<div class="t" style="position:absolute;left:1966.8px;top:412.40px;font-size:17px;color:#000;transform:scaleX(1.0340);">FINI</div>
<div class="t" style="position:absolute;left:2260.7px;top:412.40px;font-size:17px;color:#000;transform:scaleX(1.0746);">Product16</div>
<div style="position:absolute;left:0;top:458.85px;width:35px;height:1.2px;background:#c8c8c8"></div>
<div class="t" style="position:absolute;left:9.712484374999999px;top:440.83px;font-size:15.8px;color:#333;">19</div>
<div class="t" style="position:absolute;left:70.646328125px;top:439.52px;font-size:16.5px;color:#ffffff;">17</div>
<div style="position:absolute;left:93.5px;top:434.10px;width:0;height:0;border-top:7px solid #0a7a0a;border-right:8px solid transparent"></div>
<div class="t" style="position:absolute;left:96px;top:439.45px;font-size:17px;color:#000;transform:scaleX(0.9989);">000001027</div>
<div class="t" style="position:absolute;left:838.3px;top:439.45px;font-size:17px;color:#000;transform:scaleX(1.1592);">Implement</div>
<div class="t" style="position:absolute;left:964px;top:439.45px;font-size:17px;color:#000;transform:scaleX(1.0702);">Products</div>
<div class="t" style="position:absolute;left:1179.5px;top:439.45px;font-size:17px;color:#000;transform:scaleX(1.0762);">IM_</div>
<div class="t" style="position:absolute;left:1966.8px;top:439.45px;font-size:17px;color:#000;transform:scaleX(1.0340);">FINI</div>
<div class="t" style="position:absolute;left:2260.7px;top:439.45px;font-size:17px;color:#000;transform:scaleX(1.0746);">Product17</div>
<div style="position:absolute;left:0;top:485.90px;width:35px;height:1.2px;background:#c8c8c8"></div>
<div class="t" style="position:absolute;left:9.712484374999999px;top:467.88px;font-size:15.8px;color:#333;">20</div>
<div class="t" style="position:absolute;left:70.646328125px;top:466.58px;font-size:16.5px;color:#ffffff;">18</div>
<div style="position:absolute;left:93.5px;top:461.15px;width:0;height:0;border-top:7px solid #0a7a0a;border-right:8px solid transparent"></div>
<div class="t" style="position:absolute;left:96px;top:466.50px;font-size:17px;color:#000;transform:scaleX(0.9989);">000001031</div>
<div class="t" style="position:absolute;left:838.3px;top:466.50px;font-size:17px;color:#000;transform:scaleX(1.1592);">Implement</div>
<div class="t" style="position:absolute;left:964px;top:466.50px;font-size:17px;color:#000;transform:scaleX(1.0702);">Products</div>
<div class="t" style="position:absolute;left:1179.5px;top:466.50px;font-size:17px;color:#000;transform:scaleX(1.0762);">IM_</div>
<div class="t" style="position:absolute;left:1966.8px;top:466.50px;font-size:17px;color:#000;transform:scaleX(1.0340);">FINI</div>
<div class="t" style="position:absolute;left:2260.7px;top:466.50px;font-size:17px;color:#000;transform:scaleX(1.0746);">Product18</div>
<div style="position:absolute;left:0;top:512.95px;width:35px;height:1.2px;background:#c8c8c8"></div>
<div class="t" style="position:absolute;left:9.712484374999999px;top:494.93px;font-size:15.8px;color:#333;">21</div>
<div class="t" style="position:absolute;left:70.646328125px;top:493.63px;font-size:16.5px;color:#ffffff;">19</div>
<div style="position:absolute;left:93.5px;top:488.20px;width:0;height:0;border-top:7px solid #0a7a0a;border-right:8px solid transparent"></div>
<div class="t" style="position:absolute;left:96px;top:493.55px;font-size:17px;color:#000;transform:scaleX(0.9989);">000001033</div>
<div class="t" style="position:absolute;left:356px;top:493.55px;font-size:17px;color:#000;transform:scaleX(0.8552);">C</div>
<div class="t" style="position:absolute;left:838.3px;top:493.55px;font-size:17px;color:#000;transform:scaleX(1.1592);">Implement</div>
<div class="t" style="position:absolute;left:964px;top:493.55px;font-size:17px;color:#000;transform:scaleX(1.0702);">Products</div>
<div class="t" style="position:absolute;left:1179.5px;top:493.55px;font-size:17px;color:#000;transform:scaleX(1.0762);">IM_</div>
<div class="t" style="position:absolute;left:1966.8px;top:493.55px;font-size:17px;color:#000;transform:scaleX(1.0340);">FINI</div>
<div class="t" style="position:absolute;left:2260.7px;top:493.55px;font-size:17px;color:#000;transform:scaleX(1.0746);">Product19</div>
<div style="position:absolute;left:0;top:540.00px;width:35px;height:1.2px;background:#c8c8c8"></div>
<div class="t" style="position:absolute;left:9.712484374999999px;top:521.98px;font-size:15.8px;color:#333;">22</div>
<div class="t" style="position:absolute;left:70.646328125px;top:520.68px;font-size:16.5px;color:#ffffff;">20</div>
<div style="position:absolute;left:93.5px;top:515.25px;width:0;height:0;border-top:7px solid #0a7a0a;border-right:8px solid transparent"></div>
<div class="t" style="position:absolute;left:96px;top:520.60px;font-size:17px;color:#000;transform:scaleX(0.9989);">000001038</div>
<div class="t" style="position:absolute;left:356px;top:520.60px;font-size:17px;color:#000;transform:scaleX(0.8552);">C</div>
<div class="t" style="position:absolute;left:838.3px;top:520.60px;font-size:17px;color:#000;transform:scaleX(1.1592);">Implement</div>
<div class="t" style="position:absolute;left:964px;top:520.60px;font-size:17px;color:#000;transform:scaleX(1.0702);">Products</div>
<div class="t" style="position:absolute;left:1179.5px;top:520.60px;font-size:17px;color:#000;transform:scaleX(1.0762);">IM_</div>
<div class="t" style="position:absolute;left:1966.8px;top:520.60px;font-size:17px;color:#000;transform:scaleX(1.0340);">FINI</div>
<div class="t" style="position:absolute;left:2260.7px;top:520.60px;font-size:17px;color:#000;transform:scaleX(1.0746);">Product20</div>
<div style="position:absolute;left:0;top:567.05px;width:35px;height:1.2px;background:#c8c8c8"></div>
<div class="t" style="position:absolute;left:9.712484374999999px;top:549.03px;font-size:15.8px;color:#333;">23</div>
<div class="t" style="position:absolute;left:70.646328125px;top:547.73px;font-size:16.5px;color:#ffffff;">21</div>
<div style="position:absolute;left:93.5px;top:542.30px;width:0;height:0;border-top:7px solid #0a7a0a;border-right:8px solid transparent"></div>
<div class="t" style="position:absolute;left:96px;top:547.65px;font-size:17px;color:#000;transform:scaleX(0.9989);">000001041</div>
<div class="t" style="position:absolute;left:838.3px;top:547.65px;font-size:17px;color:#000;transform:scaleX(1.1592);">Implement</div>
<div class="t" style="position:absolute;left:964px;top:547.65px;font-size:17px;color:#000;transform:scaleX(1.0702);">Products</div>
<div class="t" style="position:absolute;left:1179.5px;top:547.65px;font-size:17px;color:#000;transform:scaleX(1.0762);">IM_</div>
<div class="t" style="position:absolute;left:1966.8px;top:547.65px;font-size:17px;color:#000;transform:scaleX(1.0340);">FINI</div>
<div class="t" style="position:absolute;left:2260.7px;top:547.65px;font-size:17px;color:#000;transform:scaleX(1.0746);">Product21</div>
<div style="position:absolute;left:0;top:594.10px;width:35px;height:1.2px;background:#c8c8c8"></div>
<div class="t" style="position:absolute;left:9.712484374999999px;top:576.08px;font-size:15.8px;color:#333;">24</div>
<div class="t" style="position:absolute;left:70.646328125px;top:574.78px;font-size:16.5px;color:#ffffff;">22</div>
<div style="position:absolute;left:93.5px;top:569.35px;width:0;height:0;border-top:7px solid #0a7a0a;border-right:8px solid transparent"></div>
<div class="t" style="position:absolute;left:96px;top:574.70px;font-size:17px;color:#000;transform:scaleX(0.9989);">000001046</div>
<div class="t" style="position:absolute;left:838.3px;top:574.70px;font-size:17px;color:#000;transform:scaleX(1.1592);">Implement</div>
<div class="t" style="position:absolute;left:964px;top:574.70px;font-size:17px;color:#000;transform:scaleX(1.0702);">Products</div>
<div class="t" style="position:absolute;left:1179.5px;top:574.70px;font-size:17px;color:#000;transform:scaleX(1.0762);">IM_</div>
<div class="t" style="position:absolute;left:1966.8px;top:574.70px;font-size:17px;color:#000;transform:scaleX(1.0340);">FINI</div>
<div class="t" style="position:absolute;left:2260.7px;top:574.70px;font-size:17px;color:#000;transform:scaleX(1.0746);">Product22</div>
<div style="position:absolute;left:0;top:621.15px;width:35px;height:1.2px;background:#c8c8c8"></div>
<div class="t" style="position:absolute;left:9.712484374999999px;top:603.13px;font-size:15.8px;color:#333;">25</div>
<div class="t" style="position:absolute;left:70.646328125px;top:601.83px;font-size:16.5px;color:#ffffff;">23</div>
<div style="position:absolute;left:93.5px;top:596.40px;width:0;height:0;border-top:7px solid #0a7a0a;border-right:8px solid transparent"></div>
<div class="t" style="position:absolute;left:96px;top:601.75px;font-size:17px;color:#000;transform:scaleX(0.9989);">000001047</div>
<div class="t" style="position:absolute;left:838.3px;top:601.75px;font-size:17px;color:#000;transform:scaleX(1.1592);">Implement</div>
<div class="t" style="position:absolute;left:964px;top:601.75px;font-size:17px;color:#000;transform:scaleX(1.0702);">Products</div>
<div class="t" style="position:absolute;left:1179.5px;top:601.75px;font-size:17px;color:#000;transform:scaleX(1.0762);">IM_</div>
<div class="t" style="position:absolute;left:1966.8px;top:601.75px;font-size:17px;color:#000;transform:scaleX(1.0340);">FINI</div>
<div class="t" style="position:absolute;left:2260.7px;top:601.75px;font-size:17px;color:#000;transform:scaleX(1.0746);">Product23</div>
<div style="position:absolute;left:0;top:648.20px;width:35px;height:1.2px;background:#c8c8c8"></div>
<div class="t" style="position:absolute;left:9.712484374999999px;top:630.18px;font-size:15.8px;color:#333;">26</div>
<div class="t" style="position:absolute;left:70.646328125px;top:628.88px;font-size:16.5px;color:#ffffff;">24</div>
<div style="position:absolute;left:93.5px;top:623.45px;width:0;height:0;border-top:7px solid #0a7a0a;border-right:8px solid transparent"></div>
<div class="t" style="position:absolute;left:96px;top:628.80px;font-size:17px;color:#000;transform:scaleX(0.9989);">000001048</div>
<div class="t" style="position:absolute;left:356px;top:628.80px;font-size:17px;color:#000;transform:scaleX(0.9701);">A</div>
<div class="t" style="position:absolute;left:838.3px;top:628.80px;font-size:17px;color:#000;transform:scaleX(1.1592);">Implement</div>
<div class="t" style="position:absolute;left:964px;top:628.80px;font-size:17px;color:#000;transform:scaleX(1.0702);">Products</div>
<div class="t" style="position:absolute;left:1179.5px;top:628.80px;font-size:17px;color:#000;transform:scaleX(1.0762);">IM_</div>
<div class="t" style="position:absolute;left:1966.8px;top:628.80px;font-size:17px;color:#000;transform:scaleX(1.0340);">FINI</div>
<div class="t" style="position:absolute;left:2260.7px;top:628.80px;font-size:17px;color:#000;transform:scaleX(1.0746);">Product24</div>
<div style="position:absolute;left:0;top:675.25px;width:35px;height:1.2px;background:#c8c8c8"></div>
<div class="t" style="position:absolute;left:9.712484374999999px;top:657.23px;font-size:15.8px;color:#333;">27</div>
<div class="t" style="position:absolute;left:70.646328125px;top:655.93px;font-size:16.5px;color:#ffffff;">25</div>
<div style="position:absolute;left:93.5px;top:650.50px;width:0;height:0;border-top:7px solid #0a7a0a;border-right:8px solid transparent"></div>
<div class="t" style="position:absolute;left:96px;top:655.85px;font-size:17px;color:#000;transform:scaleX(0.9989);">000001049</div>
<div class="t" style="position:absolute;left:356px;top:655.85px;font-size:17px;color:#000;transform:scaleX(0.9701);">A</div>
<div class="t" style="position:absolute;left:838.3px;top:655.85px;font-size:17px;color:#000;transform:scaleX(1.1592);">Implement</div>
<div class="t" style="position:absolute;left:964px;top:655.85px;font-size:17px;color:#000;transform:scaleX(1.0702);">Products</div>
<div class="t" style="position:absolute;left:1179.5px;top:655.85px;font-size:17px;color:#000;transform:scaleX(1.0762);">IM_</div>
<div class="t" style="position:absolute;left:1966.8px;top:655.85px;font-size:17px;color:#000;transform:scaleX(1.0340);">FINI</div>
<div class="t" style="position:absolute;left:2260.7px;top:655.85px;font-size:17px;color:#000;transform:scaleX(1.0746);">Product25</div>
<div style="position:absolute;left:0;top:702.30px;width:35px;height:1.2px;background:#c8c8c8"></div>
<div class="t" style="position:absolute;left:9.712484374999999px;top:684.28px;font-size:15.8px;color:#333;">28</div>
<div class="t" style="position:absolute;left:70.646328125px;top:682.98px;font-size:16.5px;color:#ffffff;">26</div>
<div style="position:absolute;left:93.5px;top:677.55px;width:0;height:0;border-top:7px solid #0a7a0a;border-right:8px solid transparent"></div>
<div class="t" style="position:absolute;left:96px;top:682.90px;font-size:17px;color:#000;transform:scaleX(0.9989);">000001051</div>
<div class="t" style="position:absolute;left:838.3px;top:682.90px;font-size:17px;color:#000;transform:scaleX(1.1592);">Implement</div>
<div class="t" style="position:absolute;left:964px;top:682.90px;font-size:17px;color:#000;transform:scaleX(1.0702);">Products</div>
<div class="t" style="position:absolute;left:1179.5px;top:682.90px;font-size:17px;color:#000;transform:scaleX(1.0762);">IM_</div>
<div class="t" style="position:absolute;left:1966.8px;top:682.90px;font-size:17px;color:#000;transform:scaleX(1.0340);">FINI</div>
<div class="t" style="position:absolute;left:2260.7px;top:682.90px;font-size:17px;color:#000;transform:scaleX(1.0746);">Product26</div>
<div style="position:absolute;left:0;top:729.35px;width:35px;height:1.2px;background:#c8c8c8"></div>
<div class="t" style="position:absolute;left:9.712484374999999px;top:711.33px;font-size:15.8px;color:#333;">29</div>
<div class="t" style="position:absolute;left:70.646328125px;top:710.03px;font-size:16.5px;color:#ffffff;">27</div>
<div style="position:absolute;left:93.5px;top:704.60px;width:0;height:0;border-top:7px solid #0a7a0a;border-right:8px solid transparent"></div>
<div class="t" style="position:absolute;left:96px;top:709.95px;font-size:17px;color:#000;transform:scaleX(0.9989);">000001052</div>
<div class="t" style="position:absolute;left:838.3px;top:709.95px;font-size:17px;color:#000;transform:scaleX(1.1592);">Implement</div>
<div class="t" style="position:absolute;left:964px;top:709.95px;font-size:17px;color:#000;transform:scaleX(1.0702);">Products</div>
<div class="t" style="position:absolute;left:1179.5px;top:709.95px;font-size:17px;color:#000;transform:scaleX(1.0762);">IM_</div>
<div class="t" style="position:absolute;left:1966.8px;top:709.95px;font-size:17px;color:#000;transform:scaleX(1.0340);">FINI</div>
<div class="t" style="position:absolute;left:2260.7px;top:709.95px;font-size:17px;color:#000;transform:scaleX(1.0746);">Product27</div>
<div style="position:absolute;left:0;top:756.40px;width:35px;height:1.2px;background:#c8c8c8"></div>
<div class="t" style="position:absolute;left:9.712484374999999px;top:738.38px;font-size:15.8px;color:#333;">30</div>
<div class="t" style="position:absolute;left:70.646328125px;top:737.08px;font-size:16.5px;color:#ffffff;">28</div>
<div style="position:absolute;left:93.5px;top:731.65px;width:0;height:0;border-top:7px solid #0a7a0a;border-right:8px solid transparent"></div>
<div class="t" style="position:absolute;left:96px;top:737.00px;font-size:17px;color:#000;transform:scaleX(0.9989);">000001053</div>
<div class="t" style="position:absolute;left:356px;top:737.00px;font-size:17px;color:#000;transform:scaleX(0.8552);">C</div>
<div class="t" style="position:absolute;left:838.3px;top:737.00px;font-size:17px;color:#000;transform:scaleX(1.1592);">Implement</div>
<div class="t" style="position:absolute;left:964px;top:737.00px;font-size:17px;color:#000;transform:scaleX(1.0702);">Products</div>
<div class="t" style="position:absolute;left:1179.5px;top:737.00px;font-size:17px;color:#000;transform:scaleX(1.0762);">IM_</div>
<div class="t" style="position:absolute;left:1966.8px;top:737.00px;font-size:17px;color:#000;transform:scaleX(1.0340);">FINI</div>
<div class="t" style="position:absolute;left:2260.7px;top:737.00px;font-size:17px;color:#000;transform:scaleX(1.0746);">Product28</div>
<div style="position:absolute;left:0;top:783.45px;width:35px;height:1.2px;background:#c8c8c8"></div>
<div class="t" style="position:absolute;left:9.712484374999999px;top:765.43px;font-size:15.8px;color:#333;">31</div>
<div class="t" style="position:absolute;left:70.646328125px;top:764.13px;font-size:16.5px;color:#ffffff;">29</div>
<div style="position:absolute;left:93.5px;top:758.70px;width:0;height:0;border-top:7px solid #0a7a0a;border-right:8px solid transparent"></div>
<div class="t" style="position:absolute;left:96px;top:764.05px;font-size:17px;color:#000;transform:scaleX(0.9989);">000001068</div>
<div class="t" style="position:absolute;left:838.3px;top:764.05px;font-size:17px;color:#000;transform:scaleX(1.1592);">Implement</div>
<div class="t" style="position:absolute;left:964px;top:764.05px;font-size:17px;color:#000;transform:scaleX(1.0702);">Products</div>
<div class="t" style="position:absolute;left:1179.5px;top:764.05px;font-size:17px;color:#000;transform:scaleX(1.0762);">IM_</div>
<div class="t" style="position:absolute;left:1966.8px;top:764.05px;font-size:17px;color:#000;transform:scaleX(1.0340);">FINI</div>
<div class="t" style="position:absolute;left:2260.7px;top:764.05px;font-size:17px;color:#000;transform:scaleX(1.0746);">Product29</div>
<div style="position:absolute;left:0;top:810.50px;width:35px;height:1.2px;background:#c8c8c8"></div>
<div class="t" style="position:absolute;left:9.712484374999999px;top:792.48px;font-size:15.8px;color:#333;">32</div>
<div class="t" style="position:absolute;left:70.646328125px;top:791.18px;font-size:16.5px;color:#ffffff;">30</div>
<div style="position:absolute;left:93.5px;top:785.75px;width:0;height:0;border-top:7px solid #0a7a0a;border-right:8px solid transparent"></div>
<div class="t" style="position:absolute;left:96px;top:791.10px;font-size:17px;color:#000;transform:scaleX(0.9989);">000001069</div>
<div class="t" style="position:absolute;left:838.3px;top:791.10px;font-size:17px;color:#000;transform:scaleX(1.1592);">Implement</div>
<div class="t" style="position:absolute;left:964px;top:791.10px;font-size:17px;color:#000;transform:scaleX(1.0702);">Products</div>
<div class="t" style="position:absolute;left:1179.5px;top:791.10px;font-size:17px;color:#000;transform:scaleX(1.0762);">IM_</div>
<div class="t" style="position:absolute;left:1966.8px;top:791.10px;font-size:17px;color:#000;transform:scaleX(1.0340);">FINI</div>
<div class="t" style="position:absolute;left:2260.7px;top:791.10px;font-size:17px;color:#000;transform:scaleX(1.0746);">Product30</div>
<div style="position:absolute;left:0;top:837.55px;width:35px;height:1.2px;background:#c8c8c8"></div>
<div class="t" style="position:absolute;left:9.712484374999999px;top:819.53px;font-size:15.8px;color:#333;">33</div>
<div class="t" style="position:absolute;left:70.646328125px;top:818.23px;font-size:16.5px;color:#ffffff;">31</div>
<div style="position:absolute;left:93.5px;top:812.80px;width:0;height:0;border-top:7px solid #0a7a0a;border-right:8px solid transparent"></div>
<div class="t" style="position:absolute;left:96px;top:818.15px;font-size:17px;color:#000;transform:scaleX(0.9989);">000001070</div>
<div class="t" style="position:absolute;left:838.3px;top:818.15px;font-size:17px;color:#000;transform:scaleX(1.1592);">Implement</div>
<div class="t" style="position:absolute;left:964px;top:818.15px;font-size:17px;color:#000;transform:scaleX(1.0702);">Products</div>
<div class="t" style="position:absolute;left:1179.5px;top:818.15px;font-size:17px;color:#000;transform:scaleX(1.0762);">IM_</div>
<div class="t" style="position:absolute;left:1966.8px;top:818.15px;font-size:17px;color:#000;transform:scaleX(1.0340);">FINI</div>
<div class="t" style="position:absolute;left:2260.7px;top:818.15px;font-size:17px;color:#000;transform:scaleX(1.0746);">Product31</div>
<div style="position:absolute;left:0;top:864.60px;width:35px;height:1.2px;background:#c8c8c8"></div>
<div class="t" style="position:absolute;left:9.712484374999999px;top:846.58px;font-size:15.8px;color:#333;">34</div>
<div class="t" style="position:absolute;left:70.646328125px;top:845.28px;font-size:16.5px;color:#ffffff;">32</div>
<div style="position:absolute;left:93.5px;top:839.85px;width:0;height:0;border-top:7px solid #0a7a0a;border-right:8px solid transparent"></div>
<div class="t" style="position:absolute;left:96px;top:845.20px;font-size:17px;color:#000;transform:scaleX(0.9989);">000001071</div>
<div class="t" style="position:absolute;left:838.3px;top:845.20px;font-size:17px;color:#000;transform:scaleX(1.1592);">Implement</div>
<div class="t" style="position:absolute;left:964px;top:845.20px;font-size:17px;color:#000;transform:scaleX(1.0702);">Products</div>
<div class="t" style="position:absolute;left:1179.5px;top:845.20px;font-size:17px;color:#000;transform:scaleX(1.0762);">IM_</div>
<div class="t" style="position:absolute;left:1966.8px;top:845.20px;font-size:17px;color:#000;transform:scaleX(1.0340);">FINI</div>
<div class="t" style="position:absolute;left:2260.7px;top:845.20px;font-size:17px;color:#000;transform:scaleX(1.0746);">Product32</div>
<div style="position:absolute;left:0;top:891.65px;width:35px;height:1.2px;background:#c8c8c8"></div>
<div class="t" style="position:absolute;left:9.712484374999999px;top:873.63px;font-size:15.8px;color:#333;">35</div>
<div class="t" style="position:absolute;left:70.646328125px;top:872.33px;font-size:16.5px;color:#ffffff;">33</div>
<div style="position:absolute;left:93.5px;top:866.90px;width:0;height:0;border-top:7px solid #0a7a0a;border-right:8px solid transparent"></div>
<div class="t" style="position:absolute;left:96px;top:872.25px;font-size:17px;color:#000;transform:scaleX(0.9989);">000001074</div>
<div class="t" style="position:absolute;left:838.3px;top:872.25px;font-size:17px;color:#000;transform:scaleX(1.1592);">Implement</div>
<div class="t" style="position:absolute;left:964px;top:872.25px;font-size:17px;color:#000;transform:scaleX(1.0702);">Products</div>
<div class="t" style="position:absolute;left:1179.5px;top:872.25px;font-size:17px;color:#000;transform:scaleX(1.0762);">IM_</div>
<div class="t" style="position:absolute;left:1966.8px;top:872.25px;font-size:17px;color:#000;transform:scaleX(1.0340);">FINI</div>
<div class="t" style="position:absolute;left:2260.7px;top:872.25px;font-size:17px;color:#000;transform:scaleX(1.0746);">Product33</div>
<div style="position:absolute;left:0;top:918.70px;width:35px;height:1.2px;background:#c8c8c8"></div>
<div class="t" style="position:absolute;left:9.712484374999999px;top:900.68px;font-size:15.8px;color:#333;">36</div>
<div class="t" style="position:absolute;left:70.646328125px;top:899.38px;font-size:16.5px;color:#ffffff;">34</div>
<div style="position:absolute;left:93.5px;top:893.95px;width:0;height:0;border-top:7px solid #0a7a0a;border-right:8px solid transparent"></div>
<div class="t" style="position:absolute;left:96px;top:899.30px;font-size:17px;color:#000;transform:scaleX(0.9989);">000001075</div>
<div class="t" style="position:absolute;left:838.3px;top:899.30px;font-size:17px;color:#000;transform:scaleX(1.1592);">Implement</div>
<div class="t" style="position:absolute;left:964px;top:899.30px;font-size:17px;color:#000;transform:scaleX(1.0702);">Products</div>
<div class="t" style="position:absolute;left:1179.5px;top:899.30px;font-size:17px;color:#000;transform:scaleX(1.0762);">IM_</div>
<div class="t" style="position:absolute;left:1966.8px;top:899.30px;font-size:17px;color:#000;transform:scaleX(1.0340);">FINI</div>
<div class="t" style="position:absolute;left:2260.7px;top:899.30px;font-size:17px;color:#000;transform:scaleX(1.0746);">Product34</div>
<div style="position:absolute;left:0;top:945.75px;width:35px;height:1.2px;background:#c8c8c8"></div>
<div class="t" style="position:absolute;left:9.712484374999999px;top:927.73px;font-size:15.8px;color:#333;">37</div>
<div class="t" style="position:absolute;left:70.646328125px;top:926.43px;font-size:16.5px;color:#ffffff;">35</div>
<div style="position:absolute;left:93.5px;top:921.00px;width:0;height:0;border-top:7px solid #0a7a0a;border-right:8px solid transparent"></div>
<div class="t" style="position:absolute;left:96px;top:926.35px;font-size:17px;color:#000;transform:scaleX(0.9989);">000001086</div>
<div class="t" style="position:absolute;left:838.3px;top:926.35px;font-size:17px;color:#000;transform:scaleX(1.1592);">Implement</div>
<div class="t" style="position:absolute;left:964px;top:926.35px;font-size:17px;color:#000;transform:scaleX(1.0702);">Products</div>
<div class="t" style="position:absolute;left:1179.5px;top:926.35px;font-size:17px;color:#000;transform:scaleX(1.0762);">IM_</div>
<div class="t" style="position:absolute;left:1966.8px;top:926.35px;font-size:17px;color:#000;transform:scaleX(1.0340);">FINI</div>
<div class="t" style="position:absolute;left:2260.7px;top:926.35px;font-size:17px;color:#000;transform:scaleX(1.0746);">Product35</div>
<div style="position:absolute;left:0;top:972.80px;width:35px;height:1.2px;background:#c8c8c8"></div>
<div class="t" style="position:absolute;left:9.712484374999999px;top:954.78px;font-size:15.8px;color:#333;">38</div>
<div class="t" style="position:absolute;left:70.646328125px;top:953.48px;font-size:16.5px;color:#ffffff;">36</div>
<div style="position:absolute;left:93.5px;top:948.05px;width:0;height:0;border-top:7px solid #0a7a0a;border-right:8px solid transparent"></div>
<div class="t" style="position:absolute;left:96px;top:953.40px;font-size:17px;color:#000;transform:scaleX(0.9989);">000001089</div>
<div class="t" style="position:absolute;left:838.3px;top:953.40px;font-size:17px;color:#000;transform:scaleX(1.1592);">Implement</div>
<div class="t" style="position:absolute;left:964px;top:953.40px;font-size:17px;color:#000;transform:scaleX(1.0702);">Products</div>
<div class="t" style="position:absolute;left:1179.5px;top:953.40px;font-size:17px;color:#000;transform:scaleX(1.0762);">IM_</div>
<div class="t" style="position:absolute;left:1966.8px;top:953.40px;font-size:17px;color:#000;transform:scaleX(1.0340);">FINI</div>
<div class="t" style="position:absolute;left:2260.7px;top:953.40px;font-size:17px;color:#000;transform:scaleX(1.0746);">Product36</div>
</div>
<div style="left:35px;top:305px;width:154px;height:71px;border:2.5px solid #0f6b30;border-bottom:none"></div>
<div style="left:184px;top:375px;width:7px;height:2px;background:#0f6b30;"></div>
<div style="left:1273px;top:1052.5px;width:114px;height:31px;border:2.5px solid #0e6027"></div>
<div style="left:1381px;top:1078px;width:7.5px;height:7.5px;background:#0e6027;border:1px solid #fff"></div>
<div style="left:2570px;top:280px;width:30px;height:1060px;background:#e6e6e6;"></div>
<div style="left:2570px;top:306px;width:1.2px;height:1034px;background:#bdbdbd;"></div>
<div style="left:2576px;top:303px;width:20px;height:1016px;background:#dadada;"></div>
<div style="left:2576px;top:283px;width:20px;height:20px;background:#fff;border:1.2px solid #5a5a5a"></div>
<svg style="left:2581px;top:290px;" width="10" height="6" viewBox="0 0 10 6"><path d="M0 6h10L5 0z" fill="#666"/></svg>
<div style="left:2576px;top:303px;width:20px;height:23px;background:#fff;border:1.2px solid #5a5a5a"></div>
<div style="left:2575px;top:1319px;width:19.5px;height:20px;background:#fff;border:1.2px solid #5a5a5a"></div>
<svg style="left:2580px;top:1327px;" width="10" height="6" viewBox="0 0 10 6"><path d="M0 0h10L5 6z" fill="#666"/></svg>
<svg style="left:2200px;top:1300px;" width="50" height="45" viewBox="0 0 50 45"><rect x="12.5" y="13" width="26" height="27" rx="1.2" fill="#fff" stroke="#a0a0a0" stroke-width="1.2"/><rect x="16.5" y="17" width="8" height="5.3" fill="#2f8de4"/><path d="M16.5 17H32.5V22.3H16.5V27.8H24.5V17" fill="none" stroke="#7a7a7a" stroke-width="1.1"/><g fill="#777"><circle cx="16.5" cy="30.5" r="0.7"/><circle cx="24.5" cy="30.5" r="0.7"/><circle cx="16.5" cy="33.3" r="0.7"/><circle cx="19.2" cy="33.3" r="0.7"/><circle cx="21.9" cy="33.3" r="0.7"/><circle cx="24.5" cy="33.3" r="0.7"/></g><path d="M31.3 27.2V33.8M28 30.5H34.6" stroke="#6a6a6a" stroke-width="1.1"/></svg>
<div style="left:780px;top:122px;width:196px;height:159px;background:#fff;border:1px solid #d2d2d2;box-shadow:2px 2px 4px rgba(0,0,0,0.18)"></div>
<svg style="left:799px;top:132px;" width="21" height="20" viewBox="0 0 21 20"><path d="M6 14H5a4.5 4.5 0 0 1-.5-9 6 6 0 0 1 11.5-1 4.5 4.5 0 0 1 0 9h-2" fill="none" stroke="#3a77b6" stroke-width="1.6"/><path d="M10.5 20V8M7 11.5l3.5-3.5 3.5 3.5" fill="none" stroke="#3a77b6" stroke-width="1.7"/></svg>
<div class="t" style="left:832px;top:135.38px;font-size:15.5px;color:#333333;transform:scaleX(0.9686);">Save Changes...</div>
<svg style="left:799px;top:169px;" width="20" height="21" viewBox="0 0 40 38"><path d="M19.4 0L38.8 11.2V32L19.4 43 0 32V11.2z" fill="#3b78b5"/><g fill="none" stroke="#f3f2f1" stroke-width="2.1" stroke-linejoin="miter"><path d="M10.4 4.9L19.3 10 28.3 4.9"/><path d="M19.3 11.5L28.6 16.8V27.2L19.3 32.5 10 27.2V16.8z"/><path d="M0 21.6L10 27.3M38.8 21.6L28.6 27.3M10 27.2V44M28.6 27.2V44"/></g></svg>
<div class="t" style="left:832px;top:172.88px;font-size:15.5px;color:#333333;transform:scaleX(0.9820);">Single...</div>
<div style="left:832px;top:189px;width:10px;height:1.2px;background:#444;"></div>
<div style="left:777px;top:202px;width:194px;height:44px;border:3px solid #ee1c25;background:#d1d1d1;box-shadow:inset 0 0 5px rgba(0,0,0,0.35), 1px 2px 4px rgba(0,0,0,0.25)"></div>
<svg style="left:799px;top:210px;" width="21" height="23" viewBox="0 0 21 23"><path d="M17 12a7.5 7.5 0 1 1-3.5-7.5" fill="none" stroke="#3a77b6" stroke-width="1.8"/><path d="M11 1l3.5 3.5L11 8" fill="none" stroke="#3a77b6" stroke-width="1.8"/></svg>
<div class="t" style="left:832px;top:214.88px;font-size:15.5px;color:#333333;transform:scaleX(0.9636);">Refresh</div>
<div style="left:832px;top:231px;width:10px;height:1.2px;background:#444;"></div>
<svg style="left:888px;top:213px;" width="18" height="27" viewBox="0 0 18 27"><path d="M1 1v21l5-5 4 9 3-1.5-4-8.5h7z" fill="#fff" stroke="#000" stroke-width="1.4" stroke-linejoin="round"/></svg>
<div class="t" style="left:832px;top:252.28px;font-size:15.5px;color:#b8b8b8;">Reload Cache</div>
<div style="left:885px;top:270px;width:10px;height:1.2px;background:#c4c4c4;"></div>
<div style="left:0px;top:1340px;width:2600px;height:37px;background:#e6e6e6;"></div>
<div style="left:0px;top:1339px;width:2600px;height:1.5px;background:#a9a9a9;"></div>
<svg style="left:36px;top:1352px;" width="8" height="12" viewBox="0 0 8 12"><path d="M7 0v12L0 6z" fill="#bdbdbd"/></svg>
<svg style="left:75px;top:1352px;" width="8" height="12" viewBox="0 0 8 12"><path d="M0 0v12l7-6z" fill="#bdbdbd"/></svg>
<div style="left:137px;top:1339px;width:96px;height:34px;background:#fff;border-left:1px solid #cfcfcf;border-right:1px solid #cfcfcf"></div>
<div style="left:137px;top:1370px;width:96px;height:3px;background:#1b6b3c;"></div>
<div class="t" style="left:153.7px;top:1348.53px;font-size:16.5px;color:#1b5e38;font-weight:bold;transform:scaleX(1.0203);">Product</div>
<svg style="left:278px;top:1347px;" width="22" height="22" viewBox="0 0 22 22"><circle cx="11" cy="11" r="10" fill="none" stroke="#6a6a6a" stroke-width="1.4"/><path d="M11 5v12M5 11h12" stroke="#6a6a6a" stroke-width="1.6"/></svg>
<div style="left:1560px;top:1351px;width:2.5px;height:2.5px;background:#9a9a9a;border-radius:1px"></div>
<div style="left:1560px;top:1357px;width:2.5px;height:2.5px;background:#9a9a9a;border-radius:1px"></div>
<div style="left:1560px;top:1363px;width:2.5px;height:2.5px;background:#9a9a9a;border-radius:1px"></div>
<div style="left:1602px;top:1349px;width:944px;height:20px;background:#dadada;"></div>
<div style="left:1583px;top:1349px;width:20px;height:20px;background:#fff;border:1.2px solid #5a5a5a"></div>
<svg style="left:1589.5px;top:1354px;" width="6" height="10" viewBox="0 0 6 10"><path d="M6 0v10L0 5z" fill="#666"/></svg>
<div style="left:1602px;top:1349px;width:441px;height:20px;background:#fff;border:1.2px solid #5a5a5a"></div>
<div style="left:2546px;top:1349px;width:20px;height:20px;background:#fff;border:1.2px solid #5a5a5a"></div>
<svg style="left:2553px;top:1354px;" width="6" height="10" viewBox="0 0 6 10"><path d="M0 0v10l6-5z" fill="#666"/></svg>
<div style="left:0px;top:1377px;width:2600px;height:30px;background:#f3f2f1;"></div>
<div style="left:0px;top:1377px;width:2600px;height:1.2px;background:#cdcdcd;"></div>
<div class="t" style="left:11px;top:1385.67px;font-size:15.5px;color:#444;transform:scaleX(0.9240);">Ready</div>
<svg style="left:80px;top:1384px;" width="20" height="16" viewBox="0 0 20 16"><path d="M1 1h17v3H1zM1 4v11h8" fill="none" stroke="#444" stroke-width="1.2"/><path d="M4 7h4M4 10h3" stroke="#444" stroke-width="1.2"/><circle cx="14" cy="11" r="4.5" fill="#f3f2f1" stroke="#444" stroke-width="1.2"/><circle cx="14" cy="11" r="1.8" fill="#444"/></svg>
<div style="left:2188px;top:1378px;width:54px;height:29px;background:#d4d4d4;"></div>
<svg style="left:2205px;top:1384px;" width="18" height="17" viewBox="0 0 18 17"><path d="M1 1h16v15H1zM1 6h16M1 11h16M6.3 1v15M11.6 1v15" fill="none" stroke="#444" stroke-width="1.3"/></svg>
<svg style="left:2260px;top:1384px;" width="20" height="17" viewBox="0 0 20 17"><path d="M1 1h18v15H1z" fill="none" stroke="#444" stroke-width="1.3"/><path d="M4 4h12v9H4z" fill="none" stroke="#444" stroke-width="1.1"/><path d="M6 7h8M6 10h8" stroke="#444" stroke-width="1"/></svg>
<svg style="left:2314px;top:1383px;" width="19" height="17" viewBox="0 0 19 17"><path d="M1 1h17v15H1z" fill="none" stroke="#444" stroke-width="1.3"/><path d="M6.5 1v8M11.5 1v8M1 9h10.5" fill="none" stroke="#444" stroke-width="1.2"/></svg>
<div style="left:2360px;top:1391px;width:10px;height:1.4px;background:#444;"></div>
<div style="left:2377px;top:1391.5px;width:134px;height:1px;background:#888;"></div>
<div style="left:2442px;top:1385px;width:6px;height:14px;background:#6a6a6a;"></div>
<svg style="left:2520px;top:1386px;" width="12" height="12" viewBox="0 0 12 12"><path d="M6 0v12M0 6h12" stroke="#444" stroke-width="1.3"/></svg>
<div class="t" style="left:2548px;top:1384.67px;font-size:15.5px;color:#444;transform:scaleX(0.8806);">100 %</div>
<div style="left:0px;top:45px;width:2px;height:1362px;background:#2e6b45;"></div>
<div style="left:2599px;top:376px;width:1px;height:1031px;background:#2e6b45;"></div>
<svg style="left:-2px;top:855px;" width="18" height="28" viewBox="0 0 18 28"><g fill="none" stroke-linejoin="miter"><path d="M4.8 3.5V24.5M0 13.5H14.8M1.3 7.5L4.8 3.5 8.3 7.5M1.3 20.5L4.8 24.5 8.3 20.5" stroke="#fff" stroke-width="4"/><path d="M4.8 3.5V24.5M0 13.5H14.8" stroke="#000" stroke-width="1.6"/><path d="M1.3 7.5L4.8 3.5 8.3 7.5z M1.3 20.5L4.8 24.5 8.3 20.5z" fill="#000" stroke="#000" stroke-width="1.4"/></g></svg></body></html>
